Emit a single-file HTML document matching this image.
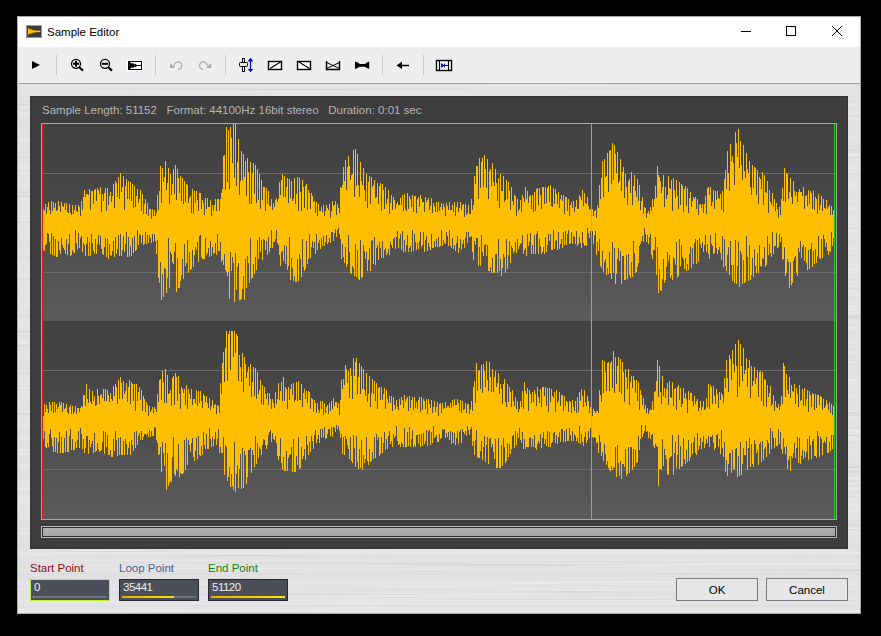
<!DOCTYPE html>
<html><head><meta charset="utf-8">
<style>
*{box-sizing:border-box}
html,body{margin:0;padding:0}
body{width:881px;height:636px;background:#000;position:relative;overflow:hidden;font-family:"Liberation Sans",sans-serif}
.a{position:absolute}
#win{left:17px;top:16px;width:844px;height:598px;border:1px solid #a9a9a9;
 background-color:#dfdfe1;
 background-image:repeating-linear-gradient(180deg,rgba(255,255,255,.35) 0px,rgba(255,255,255,0) 2px,rgba(0,0,0,.04) 3px,rgba(255,255,255,.2) 5px,rgba(0,0,0,.05) 7px,rgba(255,255,255,0) 9px);}
#title{left:18px;top:17px;width:842px;height:30px;background:#fff}
#ttext{left:47px;top:25.5px;font-size:11.5px;color:#000;white-space:pre}
#tbar{left:18px;top:47px;width:842px;height:36px;background:#eeeef1}
#tline{left:18px;top:83px;width:842px;height:1px;background:#a3a3a5}
#panel{left:30px;top:96px;width:818px;height:453px;background:#3d3d3d;border:1px solid #333}
#info{left:42px;top:103.5px;font-size:11.5px;color:#b4b4b4;white-space:pre}
#wbox{left:41px;top:123px;width:796px;height:397px;border:1px solid #a6a6a6;background:#444}
#ch1{left:42px;top:124px;width:794px;height:197px;background:linear-gradient(180deg,#424242 0%,#434343 20%,#5b5b5b 100%)}
#ch2{left:42px;top:321px;width:794px;height:198px;background:linear-gradient(180deg,#424242 0%,#434343 20%,#5b5b5b 100%)}
.grid{height:1px;background:#6c6c6c;left:42px;width:794px}
#scr{left:41px;top:526px;width:796px;height:12px;border:1px solid #bdbdbd;background:#2f2f2f}
#scri{left:43px;top:528px;width:792px;height:8px;background:linear-gradient(180deg,#b0b0b0,#a4a4a4)}
.lbl{font-size:11.5px;white-space:pre;top:562px}
.box{top:579px;width:80px;height:22px;background:#4a4f59;border:1px solid #262a30}
.val{font-size:11.5px;color:#f0f0f0;white-space:pre;top:581px;letter-spacing:-0.5px}
.prog{top:596px;height:2px;background:#6d7179}
.btn{top:578px;width:82px;height:23px;background:#e6e6e8;border:1px solid #7b7b7b;font-size:11.5px;color:#000;text-align:center;line-height:22px}
</style></head><body>
<div id="win" class="a"></div>
<div id="title" class="a"></div>
<svg class="a" style="left:26px;top:25px" width="16" height="13" viewBox="0 0 16 13">
 <rect x="0.5" y="0.5" width="15" height="12" fill="#3c3c3c" stroke="#9a9a9a"/>
 <path d="M1.9 2.6L6 6.4L1.9 10.2Z M4.6 3.6L8 6.4L4.6 9.2Z M7.6 4.4L10 6.4L7.6 8.4Z" fill="#ffbf00"/>
 <path d="M5 6.4H14.2" stroke="#ffbf00" stroke-width="1.5"/>
</svg>
<div id="ttext" class="a">Sample Editor</div>
<svg class="a" style="left:730px;top:17px" width="130" height="30">
 <path d="M11 14.5H21" stroke="#000" stroke-width="1"/>
 <rect x="56.5" y="9.5" width="9" height="9" fill="none" stroke="#000" stroke-width="1"/>
 <path d="M102 9L112 19M112 9L102 19" stroke="#000" stroke-width="1"/>
</svg>
<div id="brush" class="a" style="left:18px;top:84px;width:842px;height:529px;background:linear-gradient(180deg,rgb(227,227,229) 0px,rgb(227,227,229) 1px,rgb(228,228,230) 1px,rgb(228,228,230) 2px,rgb(227,227,229) 2px,rgb(227,227,229) 3px,rgb(226,226,228) 3px,rgb(226,226,228) 4px,rgb(225,225,227) 4px,rgb(225,225,227) 5px,rgb(226,226,228) 5px,rgb(226,226,228) 6px,rgb(229,229,231) 6px,rgb(229,229,231) 7px,rgb(228,228,230) 7px,rgb(228,228,230) 8px,rgb(230,230,232) 8px,rgb(230,230,232) 9px,rgb(228,228,230) 9px,rgb(228,228,230) 10px,rgb(228,228,230) 10px,rgb(228,228,230) 11px,rgb(228,228,230) 11px,rgb(228,228,230) 12px,rgb(224,224,226) 12px,rgb(224,224,226) 13px,rgb(228,228,230) 13px,rgb(228,228,230) 14px,rgb(228,228,230) 14px,rgb(228,228,230) 15px,rgb(228,228,230) 15px,rgb(228,228,230) 16px,rgb(224,224,226) 16px,rgb(224,224,226) 17px,rgb(223,223,225) 17px,rgb(223,223,225) 18px,rgb(224,224,226) 18px,rgb(224,224,226) 19px,rgb(225,225,227) 19px,rgb(225,225,227) 20px,rgb(227,227,229) 20px,rgb(227,227,229) 21px,rgb(227,227,229) 21px,rgb(227,227,229) 22px,rgb(228,228,230) 22px,rgb(228,228,230) 23px,rgb(226,226,228) 23px,rgb(226,226,228) 24px,rgb(227,227,229) 24px,rgb(227,227,229) 25px,rgb(228,228,230) 25px,rgb(228,228,230) 26px,rgb(226,226,228) 26px,rgb(226,226,228) 27px,rgb(230,230,232) 27px,rgb(230,230,232) 28px,rgb(229,229,231) 28px,rgb(229,229,231) 29px,rgb(230,230,232) 29px,rgb(230,230,232) 30px,rgb(227,227,229) 30px,rgb(227,227,229) 31px,rgb(226,226,228) 31px,rgb(226,226,228) 32px,rgb(226,226,228) 32px,rgb(226,226,228) 33px,rgb(226,226,228) 33px,rgb(226,226,228) 34px,rgb(228,228,230) 34px,rgb(228,228,230) 35px,rgb(228,228,230) 35px,rgb(228,228,230) 36px,rgb(226,226,228) 36px,rgb(226,226,228) 37px,rgb(225,225,227) 37px,rgb(225,225,227) 38px,rgb(225,225,227) 38px,rgb(225,225,227) 39px,rgb(229,229,231) 39px,rgb(229,229,231) 40px,rgb(226,226,228) 40px,rgb(226,226,228) 41px,rgb(227,227,229) 41px,rgb(227,227,229) 42px,rgb(228,228,230) 42px,rgb(228,228,230) 43px,rgb(224,224,226) 43px,rgb(224,224,226) 44px,rgb(226,226,228) 44px,rgb(226,226,228) 45px,rgb(229,229,231) 45px,rgb(229,229,231) 46px,rgb(224,224,226) 46px,rgb(224,224,226) 47px,rgb(225,225,227) 47px,rgb(225,225,227) 48px,rgb(226,226,228) 48px,rgb(226,226,228) 49px,rgb(225,225,227) 49px,rgb(225,225,227) 50px,rgb(227,227,229) 50px,rgb(227,227,229) 51px,rgb(227,227,229) 51px,rgb(227,227,229) 52px,rgb(224,224,226) 52px,rgb(224,224,226) 53px,rgb(228,228,230) 53px,rgb(228,228,230) 54px,rgb(229,229,231) 54px,rgb(229,229,231) 55px,rgb(229,229,231) 55px,rgb(229,229,231) 56px,rgb(231,231,233) 56px,rgb(231,231,233) 57px,rgb(229,229,231) 57px,rgb(229,229,231) 58px,rgb(228,228,230) 58px,rgb(228,228,230) 59px,rgb(225,225,227) 59px,rgb(225,225,227) 60px,rgb(227,227,229) 60px,rgb(227,227,229) 61px,rgb(226,226,228) 61px,rgb(226,226,228) 62px,rgb(226,226,228) 62px,rgb(226,226,228) 63px,rgb(224,224,226) 63px,rgb(224,224,226) 64px,rgb(224,224,226) 64px,rgb(224,224,226) 65px,rgb(225,225,227) 65px,rgb(225,225,227) 66px,rgb(229,229,231) 66px,rgb(229,229,231) 67px,rgb(224,224,226) 67px,rgb(224,224,226) 68px,rgb(223,223,225) 68px,rgb(223,223,225) 69px,rgb(226,226,228) 69px,rgb(226,226,228) 70px,rgb(229,229,231) 70px,rgb(229,229,231) 71px,rgb(229,229,231) 71px,rgb(229,229,231) 72px,rgb(224,224,226) 72px,rgb(224,224,226) 73px,rgb(221,221,223) 73px,rgb(221,221,223) 74px,rgb(226,226,228) 74px,rgb(226,226,228) 75px,rgb(225,225,227) 75px,rgb(225,225,227) 76px,rgb(224,224,226) 76px,rgb(224,224,226) 77px,rgb(228,228,230) 77px,rgb(228,228,230) 78px,rgb(229,229,231) 78px,rgb(229,229,231) 79px,rgb(228,228,230) 79px,rgb(228,228,230) 80px,rgb(228,228,230) 80px,rgb(228,228,230) 81px,rgb(228,228,230) 81px,rgb(228,228,230) 82px,rgb(231,231,233) 82px,rgb(231,231,233) 83px,rgb(229,229,231) 83px,rgb(229,229,231) 84px,rgb(229,229,231) 84px,rgb(229,229,231) 85px,rgb(229,229,231) 85px,rgb(229,229,231) 86px,rgb(225,225,227) 86px,rgb(225,225,227) 87px,rgb(229,229,231) 87px,rgb(229,229,231) 88px,rgb(229,229,231) 88px,rgb(229,229,231) 89px,rgb(229,229,231) 89px,rgb(229,229,231) 90px,rgb(224,224,226) 90px,rgb(224,224,226) 91px,rgb(225,225,227) 91px,rgb(225,225,227) 92px,rgb(228,228,230) 92px,rgb(228,228,230) 93px,rgb(224,224,226) 93px,rgb(224,224,226) 94px,rgb(226,226,228) 94px,rgb(226,226,228) 95px,rgb(228,228,230) 95px,rgb(228,228,230) 96px,rgb(225,225,227) 96px,rgb(225,225,227) 97px,rgb(229,229,231) 97px,rgb(229,229,231) 98px,rgb(229,229,231) 98px,rgb(229,229,231) 99px,rgb(227,227,229) 99px,rgb(227,227,229) 100px,rgb(228,228,230) 100px,rgb(228,228,230) 101px,rgb(229,229,231) 101px,rgb(229,229,231) 102px,rgb(228,228,230) 102px,rgb(228,228,230) 103px,rgb(230,230,232) 103px,rgb(230,230,232) 104px,rgb(227,227,229) 104px,rgb(227,227,229) 105px,rgb(226,226,228) 105px,rgb(226,226,228) 106px,rgb(229,229,231) 106px,rgb(229,229,231) 107px,rgb(228,228,230) 107px,rgb(228,228,230) 108px,rgb(226,226,228) 108px,rgb(226,226,228) 109px,rgb(228,228,230) 109px,rgb(228,228,230) 110px,rgb(230,230,232) 110px,rgb(230,230,232) 111px,rgb(227,227,229) 111px,rgb(227,227,229) 112px,rgb(224,224,226) 112px,rgb(224,224,226) 113px,rgb(226,226,228) 113px,rgb(226,226,228) 114px,rgb(226,226,228) 114px,rgb(226,226,228) 115px,rgb(226,226,228) 115px,rgb(226,226,228) 116px,rgb(229,229,231) 116px,rgb(229,229,231) 117px,rgb(226,226,228) 117px,rgb(226,226,228) 118px,rgb(229,229,231) 118px,rgb(229,229,231) 119px,rgb(225,225,227) 119px,rgb(225,225,227) 120px,rgb(225,225,227) 120px,rgb(225,225,227) 121px,rgb(227,227,229) 121px,rgb(227,227,229) 122px,rgb(229,229,231) 122px,rgb(229,229,231) 123px,rgb(230,230,232) 123px,rgb(230,230,232) 124px,rgb(229,229,231) 124px,rgb(229,229,231) 125px,rgb(228,228,230) 125px,rgb(228,228,230) 126px,rgb(228,228,230) 126px,rgb(228,228,230) 127px,rgb(228,228,230) 127px,rgb(228,228,230) 128px,rgb(227,227,229) 128px,rgb(227,227,229) 129px,rgb(228,228,230) 129px,rgb(228,228,230) 130px,rgb(228,228,230) 130px,rgb(228,228,230) 131px,rgb(227,227,229) 131px,rgb(227,227,229) 132px,rgb(229,229,231) 132px,rgb(229,229,231) 133px,rgb(229,229,231) 133px,rgb(229,229,231) 134px,rgb(232,232,234) 134px,rgb(232,232,234) 135px,rgb(229,229,231) 135px,rgb(229,229,231) 136px,rgb(227,227,229) 136px,rgb(227,227,229) 137px,rgb(226,226,228) 137px,rgb(226,226,228) 138px,rgb(227,227,229) 138px,rgb(227,227,229) 139px,rgb(229,229,231) 139px,rgb(229,229,231) 140px,rgb(227,227,229) 140px,rgb(227,227,229) 141px,rgb(228,228,230) 141px,rgb(228,228,230) 142px,rgb(231,231,233) 142px,rgb(231,231,233) 143px,rgb(223,223,225) 143px,rgb(223,223,225) 144px,rgb(224,224,226) 144px,rgb(224,224,226) 145px,rgb(226,226,228) 145px,rgb(226,226,228) 146px,rgb(228,228,230) 146px,rgb(228,228,230) 147px,rgb(228,228,230) 147px,rgb(228,228,230) 148px,rgb(226,226,228) 148px,rgb(226,226,228) 149px,rgb(228,228,230) 149px,rgb(228,228,230) 150px,rgb(228,228,230) 150px,rgb(228,228,230) 151px,rgb(226,226,228) 151px,rgb(226,226,228) 152px,rgb(231,231,233) 152px,rgb(231,231,233) 153px,rgb(229,229,231) 153px,rgb(229,229,231) 154px,rgb(227,227,229) 154px,rgb(227,227,229) 155px,rgb(227,227,229) 155px,rgb(227,227,229) 156px,rgb(226,226,228) 156px,rgb(226,226,228) 157px,rgb(227,227,229) 157px,rgb(227,227,229) 158px,rgb(222,222,224) 158px,rgb(222,222,224) 159px,rgb(224,224,226) 159px,rgb(224,224,226) 160px,rgb(228,228,230) 160px,rgb(228,228,230) 161px,rgb(225,225,227) 161px,rgb(225,225,227) 162px,rgb(226,226,228) 162px,rgb(226,226,228) 163px,rgb(229,229,231) 163px,rgb(229,229,231) 164px,rgb(229,229,231) 164px,rgb(229,229,231) 165px,rgb(231,231,233) 165px,rgb(231,231,233) 166px,rgb(225,225,227) 166px,rgb(225,225,227) 167px,rgb(226,226,228) 167px,rgb(226,226,228) 168px,rgb(226,226,228) 168px,rgb(226,226,228) 169px,rgb(228,228,230) 169px,rgb(228,228,230) 170px,rgb(229,229,231) 170px,rgb(229,229,231) 171px,rgb(223,223,225) 171px,rgb(223,223,225) 172px,rgb(228,228,230) 172px,rgb(228,228,230) 173px,rgb(224,224,226) 173px,rgb(224,224,226) 174px,rgb(227,227,229) 174px,rgb(227,227,229) 175px,rgb(224,224,226) 175px,rgb(224,224,226) 176px,rgb(226,226,228) 176px,rgb(226,226,228) 177px,rgb(229,229,231) 177px,rgb(229,229,231) 178px,rgb(227,227,229) 178px,rgb(227,227,229) 179px,rgb(228,228,230) 179px,rgb(228,228,230) 180px,rgb(229,229,231) 180px,rgb(229,229,231) 181px,rgb(228,228,230) 181px,rgb(228,228,230) 182px,rgb(227,227,229) 182px,rgb(227,227,229) 183px,rgb(230,230,232) 183px,rgb(230,230,232) 184px,rgb(230,230,232) 184px,rgb(230,230,232) 185px,rgb(228,228,230) 185px,rgb(228,228,230) 186px,rgb(233,233,235) 186px,rgb(233,233,235) 187px,rgb(227,227,229) 187px,rgb(227,227,229) 188px,rgb(229,229,231) 188px,rgb(229,229,231) 189px,rgb(227,227,229) 189px,rgb(227,227,229) 190px,rgb(227,227,229) 190px,rgb(227,227,229) 191px,rgb(228,228,230) 191px,rgb(228,228,230) 192px,rgb(228,228,230) 192px,rgb(228,228,230) 193px,rgb(229,229,231) 193px,rgb(229,229,231) 194px,rgb(225,225,227) 194px,rgb(225,225,227) 195px,rgb(223,223,225) 195px,rgb(223,223,225) 196px,rgb(227,227,229) 196px,rgb(227,227,229) 197px,rgb(225,225,227) 197px,rgb(225,225,227) 198px,rgb(224,224,226) 198px,rgb(224,224,226) 199px,rgb(223,223,225) 199px,rgb(223,223,225) 200px,rgb(228,228,230) 200px,rgb(228,228,230) 201px,rgb(229,229,231) 201px,rgb(229,229,231) 202px,rgb(231,231,233) 202px,rgb(231,231,233) 203px,rgb(226,226,228) 203px,rgb(226,226,228) 204px,rgb(227,227,229) 204px,rgb(227,227,229) 205px,rgb(225,225,227) 205px,rgb(225,225,227) 206px,rgb(228,228,230) 206px,rgb(228,228,230) 207px,rgb(230,230,232) 207px,rgb(230,230,232) 208px,rgb(226,226,228) 208px,rgb(226,226,228) 209px,rgb(230,230,232) 209px,rgb(230,230,232) 210px,rgb(230,230,232) 210px,rgb(230,230,232) 211px,rgb(228,228,230) 211px,rgb(228,228,230) 212px,rgb(223,223,225) 212px,rgb(223,223,225) 213px,rgb(228,228,230) 213px,rgb(228,228,230) 214px,rgb(227,227,229) 214px,rgb(227,227,229) 215px,rgb(226,226,228) 215px,rgb(226,226,228) 216px,rgb(227,227,229) 216px,rgb(227,227,229) 217px,rgb(228,228,230) 217px,rgb(228,228,230) 218px,rgb(230,230,232) 218px,rgb(230,230,232) 219px,rgb(226,226,228) 219px,rgb(226,226,228) 220px,rgb(229,229,231) 220px,rgb(229,229,231) 221px,rgb(231,231,233) 221px,rgb(231,231,233) 222px,rgb(231,231,233) 222px,rgb(231,231,233) 223px,rgb(228,228,230) 223px,rgb(228,228,230) 224px,rgb(226,226,228) 224px,rgb(226,226,228) 225px,rgb(229,229,231) 225px,rgb(229,229,231) 226px,rgb(228,228,230) 226px,rgb(228,228,230) 227px,rgb(228,228,230) 227px,rgb(228,228,230) 228px,rgb(230,230,232) 228px,rgb(230,230,232) 229px,rgb(228,228,230) 229px,rgb(228,228,230) 230px,rgb(223,223,225) 230px,rgb(223,223,225) 231px,rgb(225,225,227) 231px,rgb(225,225,227) 232px,rgb(223,223,225) 232px,rgb(223,223,225) 233px,rgb(227,227,229) 233px,rgb(227,227,229) 234px,rgb(228,228,230) 234px,rgb(228,228,230) 235px,rgb(226,226,228) 235px,rgb(226,226,228) 236px,rgb(227,227,229) 236px,rgb(227,227,229) 237px,rgb(228,228,230) 237px,rgb(228,228,230) 238px,rgb(228,228,230) 238px,rgb(228,228,230) 239px,rgb(230,230,232) 239px,rgb(230,230,232) 240px,rgb(228,228,230) 240px,rgb(228,228,230) 241px,rgb(229,229,231) 241px,rgb(229,229,231) 242px,rgb(231,231,233) 242px,rgb(231,231,233) 243px,rgb(231,231,233) 243px,rgb(231,231,233) 244px,rgb(227,227,229) 244px,rgb(227,227,229) 245px,rgb(229,229,231) 245px,rgb(229,229,231) 246px,rgb(224,224,226) 246px,rgb(224,224,226) 247px,rgb(224,224,226) 247px,rgb(224,224,226) 248px,rgb(222,222,224) 248px,rgb(222,222,224) 249px,rgb(227,227,229) 249px,rgb(227,227,229) 250px,rgb(225,225,227) 250px,rgb(225,225,227) 251px,rgb(226,226,228) 251px,rgb(226,226,228) 252px,rgb(226,226,228) 252px,rgb(226,226,228) 253px,rgb(227,227,229) 253px,rgb(227,227,229) 254px,rgb(226,226,228) 254px,rgb(226,226,228) 255px,rgb(227,227,229) 255px,rgb(227,227,229) 256px,rgb(230,230,232) 256px,rgb(230,230,232) 257px,rgb(228,228,230) 257px,rgb(228,228,230) 258px,rgb(228,228,230) 258px,rgb(228,228,230) 259px,rgb(229,229,231) 259px,rgb(229,229,231) 260px,rgb(227,227,229) 260px,rgb(227,227,229) 261px,rgb(225,225,227) 261px,rgb(225,225,227) 262px,rgb(225,225,227) 262px,rgb(225,225,227) 263px,rgb(228,228,230) 263px,rgb(228,228,230) 264px,rgb(224,224,226) 264px,rgb(224,224,226) 265px,rgb(225,225,227) 265px,rgb(225,225,227) 266px,rgb(228,228,230) 266px,rgb(228,228,230) 267px,rgb(229,229,231) 267px,rgb(229,229,231) 268px,rgb(228,228,230) 268px,rgb(228,228,230) 269px,rgb(229,229,231) 269px,rgb(229,229,231) 270px,rgb(228,228,230) 270px,rgb(228,228,230) 271px,rgb(225,225,227) 271px,rgb(225,225,227) 272px,rgb(223,223,225) 272px,rgb(223,223,225) 273px,rgb(224,224,226) 273px,rgb(224,224,226) 274px,rgb(228,228,230) 274px,rgb(228,228,230) 275px,rgb(226,226,228) 275px,rgb(226,226,228) 276px,rgb(225,225,227) 276px,rgb(225,225,227) 277px,rgb(225,225,227) 277px,rgb(225,225,227) 278px,rgb(223,223,225) 278px,rgb(223,223,225) 279px,rgb(225,225,227) 279px,rgb(225,225,227) 280px,rgb(224,224,226) 280px,rgb(224,224,226) 281px,rgb(227,227,229) 281px,rgb(227,227,229) 282px,rgb(222,222,224) 282px,rgb(222,222,224) 283px,rgb(226,226,228) 283px,rgb(226,226,228) 284px,rgb(225,225,227) 284px,rgb(225,225,227) 285px,rgb(223,223,225) 285px,rgb(223,223,225) 286px,rgb(227,227,229) 286px,rgb(227,227,229) 287px,rgb(226,226,228) 287px,rgb(226,226,228) 288px,rgb(222,222,224) 288px,rgb(222,222,224) 289px,rgb(224,224,226) 289px,rgb(224,224,226) 290px,rgb(226,226,228) 290px,rgb(226,226,228) 291px,rgb(226,226,228) 291px,rgb(226,226,228) 292px,rgb(228,228,230) 292px,rgb(228,228,230) 293px,rgb(229,229,231) 293px,rgb(229,229,231) 294px,rgb(229,229,231) 294px,rgb(229,229,231) 295px,rgb(228,228,230) 295px,rgb(228,228,230) 296px,rgb(230,230,232) 296px,rgb(230,230,232) 297px,rgb(229,229,231) 297px,rgb(229,229,231) 298px,rgb(229,229,231) 298px,rgb(229,229,231) 299px,rgb(224,224,226) 299px,rgb(224,224,226) 300px,rgb(228,228,230) 300px,rgb(228,228,230) 301px,rgb(230,230,232) 301px,rgb(230,230,232) 302px,rgb(227,227,229) 302px,rgb(227,227,229) 303px,rgb(226,226,228) 303px,rgb(226,226,228) 304px,rgb(231,231,233) 304px,rgb(231,231,233) 305px,rgb(225,225,227) 305px,rgb(225,225,227) 306px,rgb(227,227,229) 306px,rgb(227,227,229) 307px,rgb(232,232,234) 307px,rgb(232,232,234) 308px,rgb(227,227,229) 308px,rgb(227,227,229) 309px,rgb(228,228,230) 309px,rgb(228,228,230) 310px,rgb(231,231,233) 310px,rgb(231,231,233) 311px,rgb(228,228,230) 311px,rgb(228,228,230) 312px,rgb(229,229,231) 312px,rgb(229,229,231) 313px,rgb(229,229,231) 313px,rgb(229,229,231) 314px,rgb(226,226,228) 314px,rgb(226,226,228) 315px,rgb(226,226,228) 315px,rgb(226,226,228) 316px,rgb(227,227,229) 316px,rgb(227,227,229) 317px,rgb(229,229,231) 317px,rgb(229,229,231) 318px,rgb(228,228,230) 318px,rgb(228,228,230) 319px,rgb(227,227,229) 319px,rgb(227,227,229) 320px,rgb(225,225,227) 320px,rgb(225,225,227) 321px,rgb(226,226,228) 321px,rgb(226,226,228) 322px,rgb(228,228,230) 322px,rgb(228,228,230) 323px,rgb(228,228,230) 323px,rgb(228,228,230) 324px,rgb(226,226,228) 324px,rgb(226,226,228) 325px,rgb(225,225,227) 325px,rgb(225,225,227) 326px,rgb(231,231,233) 326px,rgb(231,231,233) 327px,rgb(231,231,233) 327px,rgb(231,231,233) 328px,rgb(230,230,232) 328px,rgb(230,230,232) 329px,rgb(223,223,225) 329px,rgb(223,223,225) 330px,rgb(227,227,229) 330px,rgb(227,227,229) 331px,rgb(228,228,230) 331px,rgb(228,228,230) 332px,rgb(231,231,233) 332px,rgb(231,231,233) 333px,rgb(229,229,231) 333px,rgb(229,229,231) 334px,rgb(228,228,230) 334px,rgb(228,228,230) 335px,rgb(228,228,230) 335px,rgb(228,228,230) 336px,rgb(224,224,226) 336px,rgb(224,224,226) 337px,rgb(228,228,230) 337px,rgb(228,228,230) 338px,rgb(228,228,230) 338px,rgb(228,228,230) 339px,rgb(226,226,228) 339px,rgb(226,226,228) 340px,rgb(229,229,231) 340px,rgb(229,229,231) 341px,rgb(231,231,233) 341px,rgb(231,231,233) 342px,rgb(226,226,228) 342px,rgb(226,226,228) 343px,rgb(225,225,227) 343px,rgb(225,225,227) 344px,rgb(227,227,229) 344px,rgb(227,227,229) 345px,rgb(227,227,229) 345px,rgb(227,227,229) 346px,rgb(226,226,228) 346px,rgb(226,226,228) 347px,rgb(225,225,227) 347px,rgb(225,225,227) 348px,rgb(230,230,232) 348px,rgb(230,230,232) 349px,rgb(230,230,232) 349px,rgb(230,230,232) 350px,rgb(226,226,228) 350px,rgb(226,226,228) 351px,rgb(224,224,226) 351px,rgb(224,224,226) 352px,rgb(229,229,231) 352px,rgb(229,229,231) 353px,rgb(230,230,232) 353px,rgb(230,230,232) 354px,rgb(232,232,234) 354px,rgb(232,232,234) 355px,rgb(230,230,232) 355px,rgb(230,230,232) 356px,rgb(226,226,228) 356px,rgb(226,226,228) 357px,rgb(227,227,229) 357px,rgb(227,227,229) 358px,rgb(223,223,225) 358px,rgb(223,223,225) 359px,rgb(224,224,226) 359px,rgb(224,224,226) 360px,rgb(226,226,228) 360px,rgb(226,226,228) 361px,rgb(228,228,230) 361px,rgb(228,228,230) 362px,rgb(226,226,228) 362px,rgb(226,226,228) 363px,rgb(226,226,228) 363px,rgb(226,226,228) 364px,rgb(228,228,230) 364px,rgb(228,228,230) 365px,rgb(228,228,230) 365px,rgb(228,228,230) 366px,rgb(229,229,231) 366px,rgb(229,229,231) 367px,rgb(228,228,230) 367px,rgb(228,228,230) 368px,rgb(227,227,229) 368px,rgb(227,227,229) 369px,rgb(228,228,230) 369px,rgb(228,228,230) 370px,rgb(228,228,230) 370px,rgb(228,228,230) 371px,rgb(226,226,228) 371px,rgb(226,226,228) 372px,rgb(225,225,227) 372px,rgb(225,225,227) 373px,rgb(226,226,228) 373px,rgb(226,226,228) 374px,rgb(227,227,229) 374px,rgb(227,227,229) 375px,rgb(227,227,229) 375px,rgb(227,227,229) 376px,rgb(227,227,229) 376px,rgb(227,227,229) 377px,rgb(227,227,229) 377px,rgb(227,227,229) 378px,rgb(227,227,229) 378px,rgb(227,227,229) 379px,rgb(224,224,226) 379px,rgb(224,224,226) 380px,rgb(227,227,229) 380px,rgb(227,227,229) 381px,rgb(229,229,231) 381px,rgb(229,229,231) 382px,rgb(229,229,231) 382px,rgb(229,229,231) 383px,rgb(227,227,229) 383px,rgb(227,227,229) 384px,rgb(228,228,230) 384px,rgb(228,228,230) 385px,rgb(225,225,227) 385px,rgb(225,225,227) 386px,rgb(223,223,225) 386px,rgb(223,223,225) 387px,rgb(226,226,228) 387px,rgb(226,226,228) 388px,rgb(225,225,227) 388px,rgb(225,225,227) 389px,rgb(228,228,230) 389px,rgb(228,228,230) 390px,rgb(225,225,227) 390px,rgb(225,225,227) 391px,rgb(221,221,223) 391px,rgb(221,221,223) 392px,rgb(223,223,225) 392px,rgb(223,223,225) 393px,rgb(229,229,231) 393px,rgb(229,229,231) 394px,rgb(227,227,229) 394px,rgb(227,227,229) 395px,rgb(224,224,226) 395px,rgb(224,224,226) 396px,rgb(225,225,227) 396px,rgb(225,225,227) 397px,rgb(227,227,229) 397px,rgb(227,227,229) 398px,rgb(228,228,230) 398px,rgb(228,228,230) 399px,rgb(228,228,230) 399px,rgb(228,228,230) 400px,rgb(230,230,232) 400px,rgb(230,230,232) 401px,rgb(229,229,231) 401px,rgb(229,229,231) 402px,rgb(228,228,230) 402px,rgb(228,228,230) 403px,rgb(228,228,230) 403px,rgb(228,228,230) 404px,rgb(231,231,233) 404px,rgb(231,231,233) 405px,rgb(230,230,232) 405px,rgb(230,230,232) 406px,rgb(230,230,232) 406px,rgb(230,230,232) 407px,rgb(226,226,228) 407px,rgb(226,226,228) 408px,rgb(226,226,228) 408px,rgb(226,226,228) 409px,rgb(228,228,230) 409px,rgb(228,228,230) 410px,rgb(227,227,229) 410px,rgb(227,227,229) 411px,rgb(229,229,231) 411px,rgb(229,229,231) 412px,rgb(229,229,231) 412px,rgb(229,229,231) 413px,rgb(229,229,231) 413px,rgb(229,229,231) 414px,rgb(227,227,229) 414px,rgb(227,227,229) 415px,rgb(232,232,234) 415px,rgb(232,232,234) 416px,rgb(231,231,233) 416px,rgb(231,231,233) 417px,rgb(228,228,230) 417px,rgb(228,228,230) 418px,rgb(228,228,230) 418px,rgb(228,228,230) 419px,rgb(232,232,234) 419px,rgb(232,232,234) 420px,rgb(228,228,230) 420px,rgb(228,228,230) 421px,rgb(229,229,231) 421px,rgb(229,229,231) 422px,rgb(230,230,232) 422px,rgb(230,230,232) 423px,rgb(228,228,230) 423px,rgb(228,228,230) 424px,rgb(225,225,227) 424px,rgb(225,225,227) 425px,rgb(227,227,229) 425px,rgb(227,227,229) 426px,rgb(228,228,230) 426px,rgb(228,228,230) 427px,rgb(229,229,231) 427px,rgb(229,229,231) 428px,rgb(229,229,231) 428px,rgb(229,229,231) 429px,rgb(228,228,230) 429px,rgb(228,228,230) 430px,rgb(229,229,231) 430px,rgb(229,229,231) 431px,rgb(229,229,231) 431px,rgb(229,229,231) 432px,rgb(228,228,230) 432px,rgb(228,228,230) 433px,rgb(227,227,229) 433px,rgb(227,227,229) 434px,rgb(227,227,229) 434px,rgb(227,227,229) 435px,rgb(228,228,230) 435px,rgb(228,228,230) 436px,rgb(225,225,227) 436px,rgb(225,225,227) 437px,rgb(225,225,227) 437px,rgb(225,225,227) 438px,rgb(226,226,228) 438px,rgb(226,226,228) 439px,rgb(224,224,226) 439px,rgb(224,224,226) 440px,rgb(225,225,227) 440px,rgb(225,225,227) 441px,rgb(222,222,224) 441px,rgb(222,222,224) 442px,rgb(224,224,226) 442px,rgb(224,224,226) 443px,rgb(227,227,229) 443px,rgb(227,227,229) 444px,rgb(228,228,230) 444px,rgb(228,228,230) 445px,rgb(227,227,229) 445px,rgb(227,227,229) 446px,rgb(227,227,229) 446px,rgb(227,227,229) 447px,rgb(224,224,226) 447px,rgb(224,224,226) 448px,rgb(230,230,232) 448px,rgb(230,230,232) 449px,rgb(229,229,231) 449px,rgb(229,229,231) 450px,rgb(230,230,232) 450px,rgb(230,230,232) 451px,rgb(226,226,228) 451px,rgb(226,226,228) 452px,rgb(226,226,228) 452px,rgb(226,226,228) 453px,rgb(223,223,225) 453px,rgb(223,223,225) 454px,rgb(227,227,229) 454px,rgb(227,227,229) 455px,rgb(229,229,231) 455px,rgb(229,229,231) 456px,rgb(224,224,226) 456px,rgb(224,224,226) 457px,rgb(226,226,228) 457px,rgb(226,226,228) 458px,rgb(228,228,230) 458px,rgb(228,228,230) 459px,rgb(224,224,226) 459px,rgb(224,224,226) 460px,rgb(222,222,224) 460px,rgb(222,222,224) 461px,rgb(223,223,225) 461px,rgb(223,223,225) 462px,rgb(224,224,226) 462px,rgb(224,224,226) 463px,rgb(223,223,225) 463px,rgb(223,223,225) 464px,rgb(226,226,228) 464px,rgb(226,226,228) 465px,rgb(227,227,229) 465px,rgb(227,227,229) 466px,rgb(228,228,230) 466px,rgb(228,228,230) 467px,rgb(229,229,231) 467px,rgb(229,229,231) 468px,rgb(231,231,233) 468px,rgb(231,231,233) 469px,rgb(231,231,233) 469px,rgb(231,231,233) 470px,rgb(226,226,228) 470px,rgb(226,226,228) 471px,rgb(226,226,228) 471px,rgb(226,226,228) 472px,rgb(224,224,226) 472px,rgb(224,224,226) 473px,rgb(224,224,226) 473px,rgb(224,224,226) 474px,rgb(226,226,228) 474px,rgb(226,226,228) 475px,rgb(227,227,229) 475px,rgb(227,227,229) 476px,rgb(228,228,230) 476px,rgb(228,228,230) 477px,rgb(224,224,226) 477px,rgb(224,224,226) 478px,rgb(224,224,226) 478px,rgb(224,224,226) 479px,rgb(226,226,228) 479px,rgb(226,226,228) 480px,rgb(226,226,228) 480px,rgb(226,226,228) 481px,rgb(226,226,228) 481px,rgb(226,226,228) 482px,rgb(227,227,229) 482px,rgb(227,227,229) 483px,rgb(225,225,227) 483px,rgb(225,225,227) 484px,rgb(228,228,230) 484px,rgb(228,228,230) 485px,rgb(228,228,230) 485px,rgb(228,228,230) 486px,rgb(227,227,229) 486px,rgb(227,227,229) 487px,rgb(226,226,228) 487px,rgb(226,226,228) 488px,rgb(226,226,228) 488px,rgb(226,226,228) 489px,rgb(221,221,223) 489px,rgb(221,221,223) 490px,rgb(223,223,225) 490px,rgb(223,223,225) 491px,rgb(226,226,228) 491px,rgb(226,226,228) 492px,rgb(224,224,226) 492px,rgb(224,224,226) 493px,rgb(226,226,228) 493px,rgb(226,226,228) 494px,rgb(227,227,229) 494px,rgb(227,227,229) 495px,rgb(224,224,226) 495px,rgb(224,224,226) 496px,rgb(226,226,228) 496px,rgb(226,226,228) 497px,rgb(226,226,228) 497px,rgb(226,226,228) 498px,rgb(228,228,230) 498px,rgb(228,228,230) 499px,rgb(228,228,230) 499px,rgb(228,228,230) 500px,rgb(227,227,229) 500px,rgb(227,227,229) 501px,rgb(225,225,227) 501px,rgb(225,225,227) 502px,rgb(226,226,228) 502px,rgb(226,226,228) 503px,rgb(227,227,229) 503px,rgb(227,227,229) 504px,rgb(228,228,230) 504px,rgb(228,228,230) 505px,rgb(228,228,230) 505px,rgb(228,228,230) 506px,rgb(226,226,228) 506px,rgb(226,226,228) 507px,rgb(224,224,226) 507px,rgb(224,224,226) 508px,rgb(225,225,227) 508px,rgb(225,225,227) 509px,rgb(225,225,227) 509px,rgb(225,225,227) 510px,rgb(224,224,226) 510px,rgb(224,224,226) 511px,rgb(226,226,228) 511px,rgb(226,226,228) 512px,rgb(226,226,228) 512px,rgb(226,226,228) 513px,rgb(227,227,229) 513px,rgb(227,227,229) 514px,rgb(228,228,230) 514px,rgb(228,228,230) 515px,rgb(227,227,229) 515px,rgb(227,227,229) 516px,rgb(231,231,233) 516px,rgb(231,231,233) 517px,rgb(228,228,230) 517px,rgb(228,228,230) 518px,rgb(229,229,231) 518px,rgb(229,229,231) 519px,rgb(228,228,230) 519px,rgb(228,228,230) 520px,rgb(230,230,232) 520px,rgb(230,230,232) 521px,rgb(223,223,225) 521px,rgb(223,223,225) 522px,rgb(224,224,226) 522px,rgb(224,224,226) 523px,rgb(227,227,229) 523px,rgb(227,227,229) 524px,rgb(228,228,230) 524px,rgb(228,228,230) 525px,rgb(232,232,234) 525px,rgb(232,232,234) 526px,rgb(229,229,231) 526px,rgb(229,229,231) 527px,rgb(230,230,232) 527px,rgb(230,230,232) 528px,rgb(230,230,232) 528px,rgb(230,230,232) 529px,rgb(230,230,232) 529px,rgb(230,230,232) 530px)"></div>
<svg class="a" style="left:18px;top:84px" width="842" height="529"><defs><linearGradient id="gl"><stop offset="0" stop-color="#f4f4f6" stop-opacity="0"/><stop offset=".5" stop-color="#f4f4f6"/><stop offset="1" stop-color="#f4f4f6" stop-opacity="0"/></linearGradient><linearGradient id="gd"><stop offset="0" stop-color="#c8c8cc" stop-opacity="0"/><stop offset=".5" stop-color="#c8c8cc"/><stop offset="1" stop-color="#c8c8cc" stop-opacity="0"/></linearGradient></defs><rect x="-15" y="368" width="368" height="2" fill="url(#gd)" opacity="0.40"/><rect x="86" y="373" width="314" height="1" fill="url(#gd)" opacity="0.39"/><rect x="822" y="3" width="311" height="2" fill="url(#gd)" opacity="0.36"/><rect x="202" y="426" width="252" height="1" fill="url(#gl)" opacity="0.54"/><rect x="709" y="346" width="263" height="2" fill="url(#gl)" opacity="0.57"/><rect x="109" y="296" width="250" height="2" fill="url(#gl)" opacity="0.36"/><rect x="219" y="78" width="279" height="1" fill="url(#gd)" opacity="0.54"/><rect x="704" y="52" width="398" height="1" fill="url(#gl)" opacity="0.57"/><rect x="296" y="272" width="321" height="2" fill="url(#gl)" opacity="0.51"/><rect x="755" y="438" width="74" height="2" fill="url(#gd)" opacity="0.45"/><rect x="586" y="208" width="101" height="1" fill="url(#gl)" opacity="0.49"/><rect x="509" y="141" width="206" height="1" fill="url(#gl)" opacity="0.56"/><rect x="333" y="174" width="272" height="2" fill="url(#gl)" opacity="0.32"/><rect x="265" y="266" width="395" height="1" fill="url(#gl)" opacity="0.39"/><rect x="21" y="122" width="389" height="2" fill="url(#gl)" opacity="0.28"/><rect x="413" y="509" width="172" height="2" fill="url(#gl)" opacity="0.33"/><rect x="-8" y="437" width="340" height="1" fill="url(#gl)" opacity="0.24"/><rect x="176" y="93" width="182" height="1" fill="url(#gl)" opacity="0.52"/><rect x="617" y="20" width="271" height="1" fill="url(#gl)" opacity="0.50"/><rect x="196" y="276" width="91" height="1" fill="url(#gl)" opacity="0.43"/><rect x="391" y="515" width="382" height="1" fill="url(#gd)" opacity="0.54"/><rect x="243" y="254" width="264" height="1" fill="url(#gd)" opacity="0.37"/><rect x="-20" y="22" width="76" height="2" fill="url(#gl)" opacity="0.51"/><rect x="-150" y="501" width="97" height="2" fill="url(#gl)" opacity="0.57"/><rect x="309" y="479" width="187" height="1" fill="url(#gd)" opacity="0.29"/><rect x="814" y="111" width="418" height="1" fill="url(#gd)" opacity="0.51"/><rect x="-149" y="40" width="124" height="1" fill="url(#gl)" opacity="0.57"/><rect x="835" y="311" width="125" height="1" fill="url(#gd)" opacity="0.41"/><rect x="-49" y="114" width="96" height="1" fill="url(#gl)" opacity="0.58"/><rect x="78" y="267" width="367" height="2" fill="url(#gl)" opacity="0.41"/><rect x="831" y="285" width="221" height="1" fill="url(#gd)" opacity="0.55"/><rect x="410" y="240" width="186" height="1" fill="url(#gl)" opacity="0.36"/><rect x="-128" y="56" width="159" height="1" fill="url(#gl)" opacity="0.47"/><rect x="83" y="263" width="401" height="1" fill="url(#gl)" opacity="0.35"/><rect x="585" y="346" width="275" height="1" fill="url(#gl)" opacity="0.36"/><rect x="606" y="299" width="318" height="1" fill="url(#gl)" opacity="0.40"/><rect x="86" y="198" width="298" height="1" fill="url(#gl)" opacity="0.50"/><rect x="474" y="507" width="155" height="2" fill="url(#gd)" opacity="0.39"/><rect x="821" y="57" width="364" height="1" fill="url(#gl)" opacity="0.36"/><rect x="275" y="145" width="86" height="1" fill="url(#gd)" opacity="0.27"/><rect x="600" y="321" width="117" height="1" fill="url(#gd)" opacity="0.57"/><rect x="518" y="189" width="328" height="1" fill="url(#gd)" opacity="0.21"/><rect x="709" y="387" width="251" height="1" fill="url(#gd)" opacity="0.38"/><rect x="136" y="80" width="101" height="1" fill="url(#gl)" opacity="0.58"/><rect x="239" y="212" width="242" height="2" fill="url(#gd)" opacity="0.32"/><rect x="-100" y="89" width="302" height="1" fill="url(#gl)" opacity="0.42"/><rect x="222" y="331" width="302" height="2" fill="url(#gl)" opacity="0.36"/><rect x="-109" y="414" width="252" height="2" fill="url(#gl)" opacity="0.23"/><rect x="49" y="263" width="92" height="1" fill="url(#gd)" opacity="0.34"/><rect x="118" y="44" width="413" height="1" fill="url(#gl)" opacity="0.31"/><rect x="-126" y="66" width="179" height="1" fill="url(#gl)" opacity="0.49"/><rect x="658" y="395" width="188" height="1" fill="url(#gd)" opacity="0.53"/><rect x="37" y="508" width="64" height="2" fill="url(#gd)" opacity="0.50"/><rect x="471" y="154" width="180" height="1" fill="url(#gl)" opacity="0.33"/><rect x="374" y="80" width="161" height="1" fill="url(#gl)" opacity="0.26"/><rect x="343" y="34" width="342" height="1" fill="url(#gd)" opacity="0.26"/><rect x="-77" y="107" width="195" height="1" fill="url(#gd)" opacity="0.28"/><rect x="27" y="457" width="179" height="2" fill="url(#gl)" opacity="0.38"/><rect x="615" y="240" width="335" height="1" fill="url(#gd)" opacity="0.47"/><rect x="150" y="300" width="203" height="2" fill="url(#gd)" opacity="0.35"/><rect x="299" y="203" width="186" height="1" fill="url(#gl)" opacity="0.29"/><rect x="184" y="192" width="93" height="1" fill="url(#gl)" opacity="0.60"/><rect x="515" y="236" width="111" height="1" fill="url(#gd)" opacity="0.60"/><rect x="754" y="486" width="178" height="1" fill="url(#gd)" opacity="0.57"/><rect x="88" y="300" width="121" height="2" fill="url(#gl)" opacity="0.44"/><rect x="802" y="198" width="98" height="1" fill="url(#gl)" opacity="0.55"/><rect x="643" y="266" width="400" height="1" fill="url(#gd)" opacity="0.24"/><rect x="72" y="358" width="79" height="1" fill="url(#gl)" opacity="0.26"/><rect x="-111" y="261" width="366" height="2" fill="url(#gd)" opacity="0.57"/><rect x="268" y="335" width="407" height="1" fill="url(#gl)" opacity="0.45"/><rect x="664" y="32" width="313" height="1" fill="url(#gd)" opacity="0.23"/><rect x="529" y="404" width="341" height="1" fill="url(#gl)" opacity="0.41"/><rect x="562" y="407" width="198" height="1" fill="url(#gl)" opacity="0.31"/><rect x="169" y="52" width="350" height="1" fill="url(#gd)" opacity="0.37"/><rect x="509" y="372" width="160" height="2" fill="url(#gl)" opacity="0.36"/><rect x="773" y="444" width="140" height="1" fill="url(#gl)" opacity="0.53"/><rect x="321" y="373" width="143" height="1" fill="url(#gl)" opacity="0.22"/><rect x="-59" y="406" width="353" height="1" fill="url(#gd)" opacity="0.35"/><rect x="206" y="149" width="205" height="1" fill="url(#gl)" opacity="0.27"/><rect x="352" y="392" width="161" height="1" fill="url(#gl)" opacity="0.53"/><rect x="172" y="494" width="87" height="1" fill="url(#gd)" opacity="0.45"/><rect x="505" y="164" width="173" height="1" fill="url(#gd)" opacity="0.45"/><rect x="37" y="484" width="349" height="1" fill="url(#gl)" opacity="0.36"/><rect x="217" y="392" width="123" height="2" fill="url(#gl)" opacity="0.59"/><rect x="-108" y="197" width="347" height="1" fill="url(#gd)" opacity="0.47"/><rect x="-30" y="331" width="259" height="1" fill="url(#gd)" opacity="0.42"/><rect x="514" y="313" width="275" height="1" fill="url(#gl)" opacity="0.30"/><rect x="307" y="376" width="317" height="1" fill="url(#gl)" opacity="0.21"/><rect x="326" y="501" width="180" height="2" fill="url(#gl)" opacity="0.45"/><rect x="679" y="183" width="302" height="1" fill="url(#gl)" opacity="0.23"/><rect x="-57" y="374" width="286" height="1" fill="url(#gd)" opacity="0.46"/><rect x="-66" y="133" width="220" height="1" fill="url(#gd)" opacity="0.40"/><rect x="766" y="516" width="253" height="1" fill="url(#gd)" opacity="0.51"/><rect x="478" y="67" width="414" height="2" fill="url(#gd)" opacity="0.28"/><rect x="144" y="503" width="144" height="1" fill="url(#gd)" opacity="0.49"/><rect x="475" y="359" width="189" height="1" fill="url(#gl)" opacity="0.56"/><rect x="-3" y="467" width="190" height="1" fill="url(#gd)" opacity="0.57"/><rect x="480" y="269" width="319" height="1" fill="url(#gl)" opacity="0.35"/><rect x="15" y="413" width="385" height="2" fill="url(#gd)" opacity="0.47"/><rect x="661" y="172" width="195" height="1" fill="url(#gl)" opacity="0.41"/><rect x="839" y="368" width="291" height="2" fill="url(#gd)" opacity="0.43"/><rect x="108" y="107" width="334" height="2" fill="url(#gd)" opacity="0.36"/><rect x="234" y="271" width="248" height="2" fill="url(#gd)" opacity="0.34"/><rect x="85" y="452" width="150" height="1" fill="url(#gd)" opacity="0.58"/><rect x="109" y="528" width="218" height="1" fill="url(#gd)" opacity="0.59"/><rect x="600" y="320" width="60" height="1" fill="url(#gd)" opacity="0.29"/><rect x="277" y="442" width="322" height="1" fill="url(#gl)" opacity="0.22"/><rect x="-128" y="46" width="87" height="1" fill="url(#gl)" opacity="0.34"/><rect x="396" y="365" width="174" height="1" fill="url(#gl)" opacity="0.32"/><rect x="488" y="375" width="303" height="2" fill="url(#gl)" opacity="0.21"/><rect x="311" y="152" width="109" height="1" fill="url(#gl)" opacity="0.26"/><rect x="261" y="276" width="195" height="2" fill="url(#gd)" opacity="0.22"/><rect x="458" y="358" width="390" height="1" fill="url(#gd)" opacity="0.44"/><rect x="104" y="504" width="144" height="1" fill="url(#gd)" opacity="0.22"/><rect x="40" y="415" width="181" height="1" fill="url(#gl)" opacity="0.56"/><rect x="-5" y="201" width="271" height="1" fill="url(#gl)" opacity="0.44"/><rect x="682" y="425" width="373" height="1" fill="url(#gl)" opacity="0.32"/><rect x="760" y="49" width="304" height="2" fill="url(#gd)" opacity="0.20"/><rect x="-68" y="476" width="395" height="1" fill="url(#gl)" opacity="0.29"/><rect x="509" y="237" width="79" height="2" fill="url(#gl)" opacity="0.56"/><rect x="578" y="269" width="86" height="1" fill="url(#gl)" opacity="0.42"/><rect x="152" y="271" width="388" height="1" fill="url(#gd)" opacity="0.56"/><rect x="-135" y="519" width="146" height="2" fill="url(#gl)" opacity="0.29"/><rect x="614" y="163" width="227" height="1" fill="url(#gl)" opacity="0.36"/><rect x="779" y="388" width="382" height="2" fill="url(#gd)" opacity="0.59"/><rect x="333" y="480" width="331" height="1" fill="url(#gd)" opacity="0.54"/><rect x="434" y="239" width="217" height="1" fill="url(#gd)" opacity="0.36"/><rect x="-2" y="175" width="76" height="2" fill="url(#gl)" opacity="0.24"/><rect x="-5" y="353" width="418" height="1" fill="url(#gl)" opacity="0.22"/><rect x="563" y="43" width="94" height="1" fill="url(#gd)" opacity="0.23"/><rect x="54" y="372" width="333" height="2" fill="url(#gd)" opacity="0.23"/><rect x="-41" y="393" width="186" height="1" fill="url(#gl)" opacity="0.24"/><rect x="694" y="89" width="383" height="1" fill="url(#gd)" opacity="0.39"/><rect x="151" y="209" width="223" height="1" fill="url(#gl)" opacity="0.30"/><rect x="-101" y="289" width="248" height="1" fill="url(#gd)" opacity="0.51"/><rect x="721" y="487" width="207" height="1" fill="url(#gd)" opacity="0.21"/><rect x="381" y="446" width="110" height="1" fill="url(#gl)" opacity="0.48"/><rect x="581" y="221" width="106" height="1" fill="url(#gd)" opacity="0.31"/><rect x="145" y="206" width="87" height="1" fill="url(#gl)" opacity="0.40"/><rect x="840" y="188" width="313" height="1" fill="url(#gd)" opacity="0.58"/><rect x="140" y="162" width="169" height="1" fill="url(#gd)" opacity="0.29"/><rect x="352" y="82" width="416" height="1" fill="url(#gd)" opacity="0.24"/><rect x="260" y="97" width="262" height="1" fill="url(#gd)" opacity="0.50"/><rect x="230" y="25" width="165" height="1" fill="url(#gl)" opacity="0.37"/><rect x="238" y="175" width="382" height="1" fill="url(#gl)" opacity="0.38"/><rect x="206" y="34" width="357" height="2" fill="url(#gl)" opacity="0.26"/><rect x="23" y="331" width="297" height="1" fill="url(#gl)" opacity="0.51"/><rect x="192" y="129" width="296" height="1" fill="url(#gd)" opacity="0.48"/><rect x="158" y="273" width="420" height="2" fill="url(#gd)" opacity="0.45"/><rect x="590" y="253" width="227" height="1" fill="url(#gd)" opacity="0.34"/><rect x="114" y="193" width="112" height="1" fill="url(#gl)" opacity="0.46"/><rect x="1" y="154" width="214" height="1" fill="url(#gd)" opacity="0.37"/><rect x="137" y="109" width="165" height="1" fill="url(#gd)" opacity="0.39"/><rect x="560" y="447" width="173" height="1" fill="url(#gd)" opacity="0.45"/><rect x="113" y="145" width="369" height="1" fill="url(#gd)" opacity="0.20"/><rect x="567" y="440" width="353" height="2" fill="url(#gd)" opacity="0.46"/><rect x="545" y="234" width="152" height="1" fill="url(#gd)" opacity="0.38"/><rect x="766" y="100" width="274" height="2" fill="url(#gl)" opacity="0.36"/><rect x="106" y="160" width="276" height="2" fill="url(#gl)" opacity="0.21"/><rect x="765" y="187" width="395" height="2" fill="url(#gl)" opacity="0.20"/><rect x="-111" y="108" width="188" height="2" fill="url(#gd)" opacity="0.26"/><rect x="381" y="204" width="238" height="1" fill="url(#gl)" opacity="0.43"/><rect x="374" y="487" width="68" height="1" fill="url(#gd)" opacity="0.53"/><rect x="609" y="420" width="293" height="1" fill="url(#gl)" opacity="0.47"/><rect x="596" y="125" width="374" height="1" fill="url(#gl)" opacity="0.22"/><rect x="-88" y="409" width="66" height="1" fill="url(#gl)" opacity="0.57"/><rect x="444" y="360" width="195" height="1" fill="url(#gl)" opacity="0.32"/><rect x="670" y="224" width="260" height="2" fill="url(#gl)" opacity="0.27"/><rect x="679" y="70" width="384" height="2" fill="url(#gl)" opacity="0.46"/><rect x="211" y="149" width="401" height="2" fill="url(#gd)" opacity="0.53"/><rect x="151" y="479" width="340" height="1" fill="url(#gd)" opacity="0.51"/><rect x="123" y="235" width="420" height="1" fill="url(#gl)" opacity="0.30"/><rect x="343" y="190" width="61" height="1" fill="url(#gd)" opacity="0.52"/><rect x="178" y="309" width="305" height="1" fill="url(#gl)" opacity="0.45"/><rect x="6" y="371" width="215" height="2" fill="url(#gd)" opacity="0.22"/><rect x="652" y="332" width="131" height="1" fill="url(#gd)" opacity="0.34"/><rect x="64" y="11" width="96" height="1" fill="url(#gd)" opacity="0.30"/><rect x="724" y="146" width="179" height="2" fill="url(#gl)" opacity="0.38"/><rect x="775" y="213" width="266" height="2" fill="url(#gd)" opacity="0.27"/><rect x="534" y="92" width="340" height="1" fill="url(#gd)" opacity="0.54"/><rect x="393" y="218" width="100" height="2" fill="url(#gd)" opacity="0.38"/><rect x="120" y="121" width="274" height="1" fill="url(#gl)" opacity="0.26"/><rect x="345" y="59" width="299" height="1" fill="url(#gd)" opacity="0.48"/><rect x="402" y="168" width="366" height="2" fill="url(#gd)" opacity="0.20"/><rect x="562" y="479" width="348" height="1" fill="url(#gl)" opacity="0.32"/><rect x="278" y="436" width="406" height="1" fill="url(#gl)" opacity="0.45"/><rect x="-129" y="29" width="372" height="2" fill="url(#gl)" opacity="0.49"/><rect x="372" y="96" width="307" height="1" fill="url(#gl)" opacity="0.56"/><rect x="490" y="425" width="124" height="1" fill="url(#gl)" opacity="0.54"/><rect x="647" y="485" width="329" height="1" fill="url(#gd)" opacity="0.56"/><rect x="282" y="350" width="188" height="1" fill="url(#gd)" opacity="0.53"/><rect x="263" y="505" width="230" height="1" fill="url(#gd)" opacity="0.31"/><rect x="520" y="208" width="312" height="1" fill="url(#gd)" opacity="0.33"/><rect x="-20" y="306" width="360" height="2" fill="url(#gd)" opacity="0.24"/><rect x="590" y="408" width="343" height="1" fill="url(#gd)" opacity="0.42"/><rect x="-39" y="307" width="63" height="1" fill="url(#gl)" opacity="0.53"/><rect x="657" y="61" width="316" height="1" fill="url(#gd)" opacity="0.44"/><rect x="67" y="84" width="80" height="2" fill="url(#gd)" opacity="0.38"/><rect x="529" y="103" width="152" height="1" fill="url(#gd)" opacity="0.37"/><rect x="227" y="13" width="131" height="1" fill="url(#gd)" opacity="0.42"/><rect x="39" y="309" width="275" height="1" fill="url(#gl)" opacity="0.21"/><rect x="359" y="55" width="350" height="2" fill="url(#gd)" opacity="0.53"/><rect x="439" y="431" width="416" height="1" fill="url(#gd)" opacity="0.38"/><rect x="458" y="396" width="363" height="1" fill="url(#gd)" opacity="0.46"/><rect x="411" y="422" width="112" height="2" fill="url(#gl)" opacity="0.39"/><rect x="287" y="15" width="62" height="2" fill="url(#gl)" opacity="0.47"/><rect x="73" y="90" width="122" height="2" fill="url(#gl)" opacity="0.21"/><rect x="311" y="248" width="155" height="2" fill="url(#gd)" opacity="0.35"/><rect x="597" y="148" width="103" height="1" fill="url(#gl)" opacity="0.42"/><rect x="785" y="260" width="86" height="1" fill="url(#gd)" opacity="0.20"/><rect x="248" y="81" width="219" height="2" fill="url(#gl)" opacity="0.44"/><rect x="473" y="498" width="90" height="2" fill="url(#gl)" opacity="0.58"/><rect x="543" y="481" width="145" height="1" fill="url(#gl)" opacity="0.52"/><rect x="494" y="167" width="273" height="1" fill="url(#gl)" opacity="0.51"/><rect x="653" y="278" width="350" height="1" fill="url(#gl)" opacity="0.31"/><rect x="740" y="340" width="370" height="1" fill="url(#gd)" opacity="0.21"/><rect x="448" y="316" width="279" height="1" fill="url(#gd)" opacity="0.30"/><rect x="466" y="385" width="179" height="1" fill="url(#gd)" opacity="0.31"/><rect x="124" y="269" width="276" height="2" fill="url(#gl)" opacity="0.57"/><rect x="145" y="43" width="132" height="1" fill="url(#gd)" opacity="0.55"/><rect x="721" y="280" width="340" height="1" fill="url(#gd)" opacity="0.57"/><rect x="402" y="87" width="343" height="2" fill="url(#gl)" opacity="0.35"/><rect x="166" y="239" width="370" height="2" fill="url(#gl)" opacity="0.36"/><rect x="450" y="260" width="64" height="1" fill="url(#gd)" opacity="0.38"/><rect x="640" y="363" width="92" height="2" fill="url(#gl)" opacity="0.43"/><rect x="338" y="328" width="319" height="1" fill="url(#gd)" opacity="0.28"/><rect x="675" y="185" width="418" height="1" fill="url(#gl)" opacity="0.43"/><rect x="102" y="152" width="82" height="2" fill="url(#gd)" opacity="0.40"/><rect x="497" y="380" width="297" height="1" fill="url(#gd)" opacity="0.26"/><rect x="137" y="353" width="325" height="1" fill="url(#gd)" opacity="0.24"/><rect x="450" y="497" width="350" height="1" fill="url(#gl)" opacity="0.57"/><rect x="819" y="99" width="288" height="2" fill="url(#gd)" opacity="0.53"/><rect x="713" y="260" width="79" height="1" fill="url(#gl)" opacity="0.60"/><rect x="-98" y="28" width="77" height="1" fill="url(#gd)" opacity="0.55"/><rect x="733" y="65" width="366" height="2" fill="url(#gd)" opacity="0.57"/><rect x="113" y="92" width="223" height="2" fill="url(#gd)" opacity="0.46"/><rect x="252" y="518" width="153" height="2" fill="url(#gl)" opacity="0.26"/><rect x="26" y="227" width="79" height="1" fill="url(#gd)" opacity="0.58"/><rect x="707" y="28" width="84" height="2" fill="url(#gl)" opacity="0.41"/><rect x="-93" y="495" width="111" height="2" fill="url(#gl)" opacity="0.50"/><rect x="453" y="305" width="362" height="1" fill="url(#gl)" opacity="0.46"/><rect x="113" y="380" width="259" height="1" fill="url(#gl)" opacity="0.39"/><rect x="676" y="244" width="133" height="1" fill="url(#gd)" opacity="0.56"/><rect x="668" y="199" width="78" height="1" fill="url(#gl)" opacity="0.53"/><rect x="760" y="382" width="131" height="2" fill="url(#gd)" opacity="0.58"/><rect x="712" y="394" width="71" height="1" fill="url(#gd)" opacity="0.38"/><rect x="338" y="239" width="119" height="1" fill="url(#gd)" opacity="0.26"/><rect x="34" y="58" width="291" height="2" fill="url(#gd)" opacity="0.26"/><rect x="278" y="272" width="270" height="1" fill="url(#gl)" opacity="0.21"/><rect x="192" y="303" width="145" height="1" fill="url(#gl)" opacity="0.24"/><rect x="-34" y="494" width="138" height="2" fill="url(#gd)" opacity="0.22"/><rect x="423" y="216" width="304" height="2" fill="url(#gd)" opacity="0.25"/><rect x="292" y="373" width="193" height="1" fill="url(#gd)" opacity="0.57"/><rect x="275" y="296" width="143" height="1" fill="url(#gl)" opacity="0.49"/><rect x="302" y="16" width="319" height="1" fill="url(#gl)" opacity="0.26"/><rect x="40" y="293" width="244" height="1" fill="url(#gl)" opacity="0.56"/><rect x="-9" y="185" width="152" height="1" fill="url(#gd)" opacity="0.29"/><rect x="698" y="81" width="104" height="2" fill="url(#gd)" opacity="0.49"/><rect x="60" y="179" width="130" height="2" fill="url(#gd)" opacity="0.48"/><rect x="57" y="315" width="65" height="1" fill="url(#gl)" opacity="0.49"/><rect x="380" y="56" width="237" height="2" fill="url(#gl)" opacity="0.54"/><rect x="-58" y="504" width="67" height="1" fill="url(#gl)" opacity="0.51"/><rect x="104" y="272" width="155" height="1" fill="url(#gd)" opacity="0.59"/><rect x="438" y="380" width="364" height="2" fill="url(#gd)" opacity="0.34"/><rect x="-77" y="528" width="121" height="2" fill="url(#gl)" opacity="0.30"/><rect x="647" y="328" width="255" height="1" fill="url(#gd)" opacity="0.56"/><rect x="826" y="110" width="313" height="2" fill="url(#gl)" opacity="0.21"/><rect x="-129" y="137" width="184" height="1" fill="url(#gd)" opacity="0.29"/><rect x="169" y="105" width="188" height="1" fill="url(#gd)" opacity="0.58"/><rect x="117" y="199" width="69" height="1" fill="url(#gd)" opacity="0.45"/><rect x="569" y="244" width="287" height="2" fill="url(#gl)" opacity="0.55"/><rect x="129" y="46" width="123" height="2" fill="url(#gl)" opacity="0.43"/><rect x="-26" y="112" width="122" height="1" fill="url(#gl)" opacity="0.25"/><rect x="0" y="232" width="402" height="1" fill="url(#gd)" opacity="0.50"/><rect x="810" y="18" width="385" height="2" fill="url(#gl)" opacity="0.37"/><rect x="255" y="37" width="86" height="1" fill="url(#gd)" opacity="0.34"/><rect x="582" y="343" width="283" height="2" fill="url(#gd)" opacity="0.43"/><rect x="684" y="328" width="265" height="1" fill="url(#gd)" opacity="0.22"/><rect x="105" y="361" width="276" height="1" fill="url(#gd)" opacity="0.20"/><rect x="-80" y="191" width="226" height="1" fill="url(#gl)" opacity="0.40"/><rect x="280" y="142" width="263" height="1" fill="url(#gd)" opacity="0.57"/><rect x="-115" y="41" width="388" height="1" fill="url(#gd)" opacity="0.57"/><rect x="486" y="36" width="111" height="1" fill="url(#gl)" opacity="0.41"/><rect x="144" y="40" width="117" height="1" fill="url(#gl)" opacity="0.46"/><rect x="773" y="526" width="197" height="2" fill="url(#gl)" opacity="0.44"/><rect x="-24" y="450" width="321" height="1" fill="url(#gl)" opacity="0.32"/><rect x="130" y="295" width="184" height="1" fill="url(#gd)" opacity="0.50"/><rect x="474" y="465" width="415" height="1" fill="url(#gd)" opacity="0.46"/><rect x="321" y="375" width="340" height="2" fill="url(#gl)" opacity="0.39"/><rect x="98" y="31" width="230" height="1" fill="url(#gl)" opacity="0.40"/><rect x="-138" y="405" width="240" height="1" fill="url(#gl)" opacity="0.58"/><rect x="353" y="333" width="198" height="1" fill="url(#gl)" opacity="0.60"/><rect x="12" y="22" width="342" height="1" fill="url(#gl)" opacity="0.55"/><rect x="379" y="63" width="258" height="2" fill="url(#gd)" opacity="0.34"/><rect x="832" y="230" width="406" height="1" fill="url(#gd)" opacity="0.26"/><rect x="-7" y="360" width="405" height="1" fill="url(#gl)" opacity="0.44"/><rect x="606" y="97" width="303" height="1" fill="url(#gl)" opacity="0.45"/><rect x="272" y="130" width="112" height="1" fill="url(#gl)" opacity="0.51"/><rect x="257" y="509" width="352" height="1" fill="url(#gl)" opacity="0.54"/><rect x="238" y="113" width="291" height="1" fill="url(#gd)" opacity="0.32"/><rect x="250" y="361" width="329" height="1" fill="url(#gd)" opacity="0.35"/><rect x="239" y="511" width="287" height="2" fill="url(#gl)" opacity="0.41"/><rect x="439" y="446" width="253" height="2" fill="url(#gd)" opacity="0.24"/><rect x="842" y="331" width="371" height="1" fill="url(#gd)" opacity="0.58"/><rect x="762" y="436" width="65" height="2" fill="url(#gl)" opacity="0.30"/><rect x="792" y="307" width="334" height="2" fill="url(#gd)" opacity="0.42"/><rect x="248" y="440" width="297" height="1" fill="url(#gl)" opacity="0.44"/><rect x="542" y="10" width="94" height="1" fill="url(#gd)" opacity="0.24"/><rect x="514" y="410" width="347" height="1" fill="url(#gd)" opacity="0.26"/><rect x="348" y="431" width="265" height="2" fill="url(#gl)" opacity="0.45"/><rect x="558" y="351" width="331" height="1" fill="url(#gd)" opacity="0.24"/><rect x="-74" y="375" width="219" height="2" fill="url(#gd)" opacity="0.24"/><rect x="690" y="351" width="320" height="1" fill="url(#gd)" opacity="0.37"/><rect x="685" y="296" width="321" height="1" fill="url(#gl)" opacity="0.56"/><rect x="495" y="61" width="349" height="2" fill="url(#gd)" opacity="0.34"/><rect x="558" y="43" width="270" height="2" fill="url(#gl)" opacity="0.20"/><rect x="789" y="4" width="215" height="1" fill="url(#gl)" opacity="0.24"/><rect x="51" y="30" width="149" height="1" fill="url(#gl)" opacity="0.42"/><rect x="-3" y="526" width="354" height="1" fill="url(#gl)" opacity="0.44"/><rect x="-41" y="521" width="74" height="1" fill="url(#gl)" opacity="0.27"/><rect x="477" y="478" width="280" height="1" fill="url(#gd)" opacity="0.22"/><rect x="-3" y="330" width="181" height="1" fill="url(#gl)" opacity="0.27"/><rect x="729" y="101" width="358" height="1" fill="url(#gl)" opacity="0.28"/><rect x="-95" y="20" width="172" height="2" fill="url(#gd)" opacity="0.43"/><rect x="-95" y="450" width="377" height="1" fill="url(#gl)" opacity="0.29"/><rect x="172" y="177" width="63" height="1" fill="url(#gd)" opacity="0.53"/><rect x="833" y="258" width="313" height="1" fill="url(#gd)" opacity="0.23"/><rect x="273" y="226" width="218" height="1" fill="url(#gl)" opacity="0.48"/><rect x="-61" y="249" width="148" height="1" fill="url(#gl)" opacity="0.35"/><rect x="255" y="297" width="347" height="2" fill="url(#gl)" opacity="0.33"/><rect x="262" y="343" width="393" height="2" fill="url(#gl)" opacity="0.25"/><rect x="417" y="359" width="185" height="1" fill="url(#gl)" opacity="0.39"/><rect x="-115" y="446" width="202" height="1" fill="url(#gd)" opacity="0.34"/><rect x="-56" y="132" width="160" height="1" fill="url(#gl)" opacity="0.53"/><rect x="328" y="453" width="182" height="2" fill="url(#gl)" opacity="0.34"/><rect x="494" y="385" width="357" height="1" fill="url(#gl)" opacity="0.58"/><rect x="728" y="232" width="291" height="2" fill="url(#gd)" opacity="0.58"/><rect x="451" y="450" width="248" height="1" fill="url(#gd)" opacity="0.36"/><rect x="743" y="128" width="122" height="2" fill="url(#gd)" opacity="0.24"/><rect x="-121" y="394" width="396" height="1" fill="url(#gd)" opacity="0.26"/><rect x="561" y="88" width="150" height="1" fill="url(#gd)" opacity="0.29"/><rect x="-81" y="111" width="347" height="2" fill="url(#gd)" opacity="0.52"/><rect x="-83" y="197" width="219" height="2" fill="url(#gl)" opacity="0.32"/><rect x="139" y="408" width="242" height="2" fill="url(#gl)" opacity="0.56"/><rect x="809" y="135" width="201" height="2" fill="url(#gl)" opacity="0.35"/><rect x="768" y="359" width="271" height="1" fill="url(#gl)" opacity="0.48"/><rect x="210" y="410" width="381" height="1" fill="url(#gl)" opacity="0.32"/><rect x="579" y="224" width="406" height="1" fill="url(#gl)" opacity="0.22"/><rect x="625" y="202" width="215" height="1" fill="url(#gl)" opacity="0.50"/><rect x="428" y="183" width="176" height="1" fill="url(#gd)" opacity="0.49"/><rect x="536" y="445" width="410" height="1" fill="url(#gd)" opacity="0.57"/><rect x="772" y="293" width="81" height="1" fill="url(#gd)" opacity="0.43"/><rect x="547" y="250" width="116" height="2" fill="url(#gl)" opacity="0.33"/><rect x="617" y="353" width="104" height="2" fill="url(#gl)" opacity="0.50"/><rect x="137" y="226" width="329" height="1" fill="url(#gl)" opacity="0.58"/><rect x="558" y="348" width="317" height="1" fill="url(#gd)" opacity="0.53"/><rect x="370" y="463" width="87" height="1" fill="url(#gd)" opacity="0.28"/><rect x="351" y="130" width="156" height="2" fill="url(#gl)" opacity="0.48"/><rect x="28" y="267" width="339" height="1" fill="url(#gl)" opacity="0.51"/><rect x="105" y="266" width="90" height="1" fill="url(#gl)" opacity="0.34"/><rect x="-10" y="318" width="129" height="1" fill="url(#gd)" opacity="0.39"/><rect x="-144" y="247" width="323" height="1" fill="url(#gd)" opacity="0.25"/><rect x="-14" y="306" width="132" height="1" fill="url(#gd)" opacity="0.30"/><rect x="411" y="120" width="277" height="1" fill="url(#gd)" opacity="0.27"/><rect x="709" y="472" width="267" height="1" fill="url(#gd)" opacity="0.25"/><rect x="348" y="369" width="165" height="1" fill="url(#gl)" opacity="0.56"/><rect x="568" y="113" width="218" height="1" fill="url(#gl)" opacity="0.25"/><rect x="432" y="479" width="245" height="1" fill="url(#gl)" opacity="0.42"/><rect x="618" y="479" width="308" height="2" fill="url(#gl)" opacity="0.49"/><rect x="-39" y="270" width="390" height="1" fill="url(#gl)" opacity="0.37"/><rect x="-142" y="329" width="243" height="1" fill="url(#gd)" opacity="0.46"/><rect x="518" y="257" width="185" height="1" fill="url(#gl)" opacity="0.50"/><rect x="709" y="404" width="134" height="1" fill="url(#gl)" opacity="0.27"/><rect x="-46" y="172" width="218" height="1" fill="url(#gd)" opacity="0.33"/><rect x="177" y="364" width="177" height="1" fill="url(#gl)" opacity="0.42"/><rect x="95" y="259" width="89" height="1" fill="url(#gl)" opacity="0.43"/><rect x="776" y="412" width="85" height="1" fill="url(#gd)" opacity="0.40"/><rect x="156" y="161" width="368" height="1" fill="url(#gd)" opacity="0.23"/><rect x="-9" y="167" width="286" height="2" fill="url(#gd)" opacity="0.36"/><rect x="340" y="450" width="157" height="1" fill="url(#gl)" opacity="0.35"/><rect x="285" y="523" width="133" height="1" fill="url(#gl)" opacity="0.46"/><rect x="761" y="431" width="233" height="2" fill="url(#gl)" opacity="0.20"/><rect x="775" y="180" width="144" height="2" fill="url(#gl)" opacity="0.20"/><rect x="431" y="356" width="160" height="1" fill="url(#gl)" opacity="0.42"/><rect x="397" y="438" width="380" height="2" fill="url(#gd)" opacity="0.59"/><rect x="680" y="83" width="90" height="1" fill="url(#gd)" opacity="0.33"/><rect x="825" y="431" width="248" height="1" fill="url(#gl)" opacity="0.46"/><rect x="393" y="351" width="384" height="1" fill="url(#gl)" opacity="0.28"/><rect x="557" y="458" width="103" height="1" fill="url(#gl)" opacity="0.43"/><rect x="218" y="426" width="331" height="1" fill="url(#gl)" opacity="0.38"/><rect x="34" y="232" width="163" height="2" fill="url(#gd)" opacity="0.24"/><rect x="515" y="259" width="108" height="2" fill="url(#gl)" opacity="0.47"/><rect x="417" y="232" width="294" height="1" fill="url(#gl)" opacity="0.43"/><rect x="781" y="525" width="361" height="1" fill="url(#gd)" opacity="0.54"/><rect x="-13" y="450" width="317" height="2" fill="url(#gd)" opacity="0.49"/><rect x="491" y="117" width="323" height="1" fill="url(#gl)" opacity="0.53"/><rect x="841" y="175" width="158" height="1" fill="url(#gd)" opacity="0.51"/><rect x="264" y="58" width="181" height="2" fill="url(#gl)" opacity="0.22"/><rect x="320" y="218" width="213" height="2" fill="url(#gl)" opacity="0.25"/><rect x="486" y="89" width="163" height="2" fill="url(#gd)" opacity="0.57"/><rect x="225" y="172" width="234" height="1" fill="url(#gd)" opacity="0.49"/><rect x="-25" y="261" width="182" height="2" fill="url(#gl)" opacity="0.49"/><rect x="-106" y="500" width="369" height="1" fill="url(#gl)" opacity="0.34"/><rect x="-116" y="115" width="405" height="1" fill="url(#gl)" opacity="0.34"/><rect x="708" y="21" width="357" height="1" fill="url(#gl)" opacity="0.52"/><rect x="669" y="75" width="192" height="1" fill="url(#gl)" opacity="0.42"/><rect x="706" y="389" width="133" height="2" fill="url(#gd)" opacity="0.30"/><rect x="821" y="275" width="287" height="1" fill="url(#gl)" opacity="0.34"/><rect x="345" y="513" width="76" height="1" fill="url(#gd)" opacity="0.21"/><rect x="713" y="401" width="303" height="1" fill="url(#gd)" opacity="0.48"/><rect x="743" y="234" width="372" height="1" fill="url(#gd)" opacity="0.34"/><rect x="765" y="318" width="127" height="1" fill="url(#gd)" opacity="0.22"/><rect x="594" y="369" width="299" height="2" fill="url(#gl)" opacity="0.39"/><rect x="-144" y="321" width="231" height="1" fill="url(#gd)" opacity="0.33"/><rect x="747" y="470" width="371" height="1" fill="url(#gl)" opacity="0.26"/><rect x="243" y="279" width="199" height="1" fill="url(#gl)" opacity="0.60"/><rect x="565" y="142" width="77" height="1" fill="url(#gd)" opacity="0.56"/><rect x="642" y="204" width="278" height="1" fill="url(#gd)" opacity="0.45"/><rect x="662" y="288" width="181" height="1" fill="url(#gd)" opacity="0.58"/><rect x="836" y="311" width="234" height="1" fill="url(#gd)" opacity="0.40"/><rect x="743" y="358" width="341" height="2" fill="url(#gd)" opacity="0.33"/><rect x="754" y="330" width="306" height="2" fill="url(#gd)" opacity="0.56"/><rect x="4" y="357" width="129" height="1" fill="url(#gl)" opacity="0.56"/><rect x="306" y="414" width="262" height="1" fill="url(#gd)" opacity="0.32"/><rect x="-3" y="67" width="214" height="1" fill="url(#gd)" opacity="0.30"/><rect x="-75" y="348" width="157" height="1" fill="url(#gd)" opacity="0.23"/><rect x="329" y="361" width="242" height="2" fill="url(#gd)" opacity="0.48"/><rect x="708" y="69" width="308" height="2" fill="url(#gl)" opacity="0.27"/><rect x="626" y="23" width="144" height="1" fill="url(#gd)" opacity="0.29"/><rect x="259" y="48" width="289" height="2" fill="url(#gl)" opacity="0.44"/><rect x="51" y="101" width="183" height="1" fill="url(#gd)" opacity="0.59"/><rect x="-75" y="81" width="354" height="1" fill="url(#gl)" opacity="0.25"/><rect x="505" y="15" width="225" height="1" fill="url(#gd)" opacity="0.28"/><rect x="514" y="27" width="308" height="1" fill="url(#gl)" opacity="0.47"/><rect x="734" y="58" width="272" height="1" fill="url(#gd)" opacity="0.23"/><rect x="462" y="506" width="264" height="1" fill="url(#gl)" opacity="0.39"/><rect x="427" y="324" width="394" height="1" fill="url(#gd)" opacity="0.22"/><rect x="10" y="337" width="107" height="1" fill="url(#gl)" opacity="0.28"/><rect x="216" y="92" width="245" height="1" fill="url(#gl)" opacity="0.42"/><rect x="523" y="157" width="368" height="1" fill="url(#gd)" opacity="0.29"/><rect x="631" y="489" width="76" height="2" fill="url(#gd)" opacity="0.32"/><rect x="422" y="464" width="202" height="1" fill="url(#gl)" opacity="0.41"/><rect x="-141" y="258" width="345" height="2" fill="url(#gl)" opacity="0.46"/><rect x="4" y="371" width="381" height="1" fill="url(#gl)" opacity="0.50"/><rect x="489" y="28" width="128" height="1" fill="url(#gl)" opacity="0.42"/><rect x="115" y="186" width="370" height="1" fill="url(#gl)" opacity="0.26"/><rect x="391" y="165" width="74" height="1" fill="url(#gl)" opacity="0.48"/><rect x="68" y="510" width="385" height="1" fill="url(#gd)" opacity="0.56"/><rect x="181" y="217" width="73" height="1" fill="url(#gl)" opacity="0.49"/><rect x="540" y="411" width="239" height="1" fill="url(#gl)" opacity="0.43"/><rect x="817" y="384" width="396" height="1" fill="url(#gd)" opacity="0.29"/><rect x="576" y="268" width="282" height="1" fill="url(#gl)" opacity="0.34"/><rect x="508" y="435" width="202" height="1" fill="url(#gl)" opacity="0.60"/><rect x="338" y="160" width="196" height="1" fill="url(#gd)" opacity="0.25"/><rect x="189" y="90" width="62" height="1" fill="url(#gl)" opacity="0.56"/><rect x="67" y="463" width="356" height="2" fill="url(#gl)" opacity="0.51"/><rect x="-103" y="369" width="284" height="2" fill="url(#gl)" opacity="0.55"/><rect x="551" y="304" width="72" height="2" fill="url(#gd)" opacity="0.26"/><rect x="783" y="136" width="214" height="1" fill="url(#gl)" opacity="0.49"/><rect x="325" y="172" width="409" height="1" fill="url(#gl)" opacity="0.37"/><rect x="753" y="406" width="231" height="1" fill="url(#gd)" opacity="0.21"/><rect x="-112" y="15" width="129" height="1" fill="url(#gd)" opacity="0.29"/><rect x="595" y="107" width="70" height="1" fill="url(#gl)" opacity="0.56"/><rect x="-27" y="112" width="309" height="1" fill="url(#gd)" opacity="0.41"/><rect x="551" y="229" width="336" height="1" fill="url(#gl)" opacity="0.50"/><rect x="392" y="115" width="241" height="1" fill="url(#gd)" opacity="0.58"/><rect x="723" y="220" width="174" height="1" fill="url(#gd)" opacity="0.31"/><rect x="125" y="270" width="95" height="1" fill="url(#gd)" opacity="0.28"/><rect x="123" y="371" width="65" height="1" fill="url(#gl)" opacity="0.22"/><rect x="411" y="288" width="229" height="2" fill="url(#gd)" opacity="0.59"/><rect x="258" y="275" width="276" height="2" fill="url(#gl)" opacity="0.37"/><rect x="629" y="396" width="257" height="2" fill="url(#gd)" opacity="0.52"/><rect x="94" y="5" width="371" height="1" fill="url(#gd)" opacity="0.60"/><rect x="96" y="386" width="161" height="1" fill="url(#gd)" opacity="0.23"/><rect x="780" y="34" width="85" height="1" fill="url(#gl)" opacity="0.42"/><rect x="412" y="453" width="402" height="1" fill="url(#gl)" opacity="0.59"/><rect x="372" y="481" width="235" height="1" fill="url(#gd)" opacity="0.60"/><rect x="213" y="387" width="92" height="1" fill="url(#gl)" opacity="0.41"/><rect x="-77" y="329" width="381" height="2" fill="url(#gd)" opacity="0.47"/><rect x="118" y="271" width="302" height="1" fill="url(#gd)" opacity="0.34"/><rect x="-5" y="226" width="93" height="1" fill="url(#gd)" opacity="0.41"/><rect x="682" y="173" width="247" height="2" fill="url(#gl)" opacity="0.27"/><rect x="31" y="471" width="387" height="1" fill="url(#gd)" opacity="0.54"/><rect x="179" y="44" width="255" height="1" fill="url(#gl)" opacity="0.55"/><rect x="7" y="419" width="419" height="1" fill="url(#gl)" opacity="0.24"/><rect x="313" y="309" width="399" height="2" fill="url(#gl)" opacity="0.36"/><rect x="310" y="114" width="384" height="2" fill="url(#gl)" opacity="0.52"/><rect x="-144" y="153" width="408" height="1" fill="url(#gl)" opacity="0.40"/><rect x="385" y="379" width="234" height="1" fill="url(#gd)" opacity="0.30"/><rect x="434" y="0" width="192" height="2" fill="url(#gl)" opacity="0.27"/><rect x="788" y="281" width="225" height="1" fill="url(#gl)" opacity="0.31"/><rect x="729" y="505" width="105" height="2" fill="url(#gl)" opacity="0.37"/><rect x="792" y="380" width="82" height="1" fill="url(#gd)" opacity="0.35"/><rect x="267" y="302" width="280" height="1" fill="url(#gd)" opacity="0.52"/><rect x="720" y="394" width="356" height="2" fill="url(#gl)" opacity="0.45"/><rect x="-86" y="381" width="400" height="1" fill="url(#gl)" opacity="0.54"/><rect x="238" y="456" width="261" height="2" fill="url(#gd)" opacity="0.40"/><rect x="-40" y="26" width="363" height="2" fill="url(#gd)" opacity="0.57"/><rect x="274" y="446" width="302" height="1" fill="url(#gl)" opacity="0.23"/><rect x="374" y="138" width="64" height="1" fill="url(#gd)" opacity="0.50"/><rect x="797" y="41" width="408" height="1" fill="url(#gl)" opacity="0.33"/><rect x="-30" y="470" width="106" height="2" fill="url(#gl)" opacity="0.23"/><rect x="358" y="104" width="105" height="1" fill="url(#gd)" opacity="0.29"/><rect x="578" y="204" width="231" height="1" fill="url(#gl)" opacity="0.22"/><rect x="713" y="427" width="358" height="1" fill="url(#gl)" opacity="0.36"/><rect x="178" y="149" width="231" height="1" fill="url(#gl)" opacity="0.59"/><rect x="382" y="281" width="194" height="1" fill="url(#gl)" opacity="0.35"/><rect x="419" y="305" width="262" height="1" fill="url(#gd)" opacity="0.37"/><rect x="104" y="311" width="254" height="1" fill="url(#gd)" opacity="0.54"/><rect x="-16" y="206" width="86" height="2" fill="url(#gl)" opacity="0.46"/><rect x="576" y="500" width="358" height="1" fill="url(#gl)" opacity="0.57"/><rect x="791" y="467" width="344" height="1" fill="url(#gd)" opacity="0.49"/><rect x="268" y="69" width="349" height="1" fill="url(#gd)" opacity="0.21"/><rect x="148" y="449" width="162" height="1" fill="url(#gd)" opacity="0.52"/><rect x="265" y="465" width="287" height="1" fill="url(#gl)" opacity="0.28"/><rect x="-100" y="127" width="130" height="1" fill="url(#gd)" opacity="0.23"/><rect x="-136" y="184" width="347" height="1" fill="url(#gd)" opacity="0.27"/><rect x="671" y="301" width="168" height="2" fill="url(#gd)" opacity="0.26"/><rect x="378" y="211" width="111" height="1" fill="url(#gl)" opacity="0.28"/><rect x="274" y="51" width="174" height="2" fill="url(#gd)" opacity="0.30"/></svg>
<div id="tbar" class="a"></div>
<div id="tline" class="a"></div>
<svg class="a" style="left:18px;top:47px" width="842" height="36">
 <!-- play -->
 <path d="M14 14L22 18L14 22Z" fill="#000"/>
 <!-- separators -->
 <path d="M38.5 8V28M137.5 8V28M207.5 8V28M364.5 8V28M405.5 8V28" stroke="#c9c9cc" stroke-width="1"/>
 <!-- zoom in -->
 <g fill="none" stroke="#000">
  <circle cx="58" cy="16.8" r="4.5" stroke-width="1.3"/>
  <path d="M61 20L65 23.6" stroke-width="2.2"/>
  <path d="M55 16.8H61M58 13.8V19.8" stroke-width="2"/>
  <circle cx="87" cy="16.8" r="4.5" stroke-width="1.3"/>
  <path d="M90 20L94 23.6" stroke-width="2.2"/>
  <path d="M84 16.8H90" stroke-width="2"/>
 </g>
 <!-- fit -->
 <rect x="109" y="13" width="16" height="11" fill="#fff"/>
 <rect x="110" y="14" width="14" height="9" fill="#000"/>
 <rect x="112" y="15" width="11" height="7" fill="#fff"/>
 <path d="M112 15.2L113.2 16.2L114.5 16.6L115.2 15.8L116 17.2L117 17.6L117.8 16.4L118.6 17.9L123 17.9V19.1L118.6 19.1L117.8 20.6L117 19.4L116 19.8L115.2 21.2L114.5 20.4L113.2 20.8L112 21.8Z" fill="#000"/>
 <!-- undo redo -->
 <g fill="none" stroke="#a9a9a9" stroke-width="1.2">
  <path d="M156.3 19.3A3.8 3.8 0 1 1 159.9 22.4"/>
  <path d="M189 19.3A3.8 3.8 0 1 0 185.4 22.4"/>
 </g>
 <path d="M152 15.9V20.9H157Z" fill="#a9a9a9"/>
 <path d="M193.1 15.9V20.9H188.1Z" fill="#a9a9a9"/>
 <!-- volume -->
 <rect x="224.5" y="11.5" width="2" height="13" fill="#fff" stroke="#000" stroke-width="1"/>
 <rect x="221.5" y="15.5" width="8" height="4" rx="0.8" fill="#e8e8e8" stroke="#000" stroke-width="1"/>
 <path d="M232.5 13.5V23" stroke="#0000c8" stroke-width="1.3"/>
 <path d="M229.7 14.5L232.5 10.8L235.3 14.5Z M229.7 22L232.5 25.2L235.3 22Z" fill="#0000c8"/>
 <!-- fade in -->
 <rect x="250.5" y="14.5" width="13" height="8" fill="#fff" stroke="#000" stroke-width="1.4"/>
 <path d="M251 22.5L263.5 14.5V22.5Z" fill="none"/>
 <path d="M252 21.5L262.5 15" stroke="#000" stroke-width="1.2"/>
 <!-- fade out -->
 <rect x="279.5" y="14.5" width="13" height="8" fill="#fff" stroke="#000" stroke-width="1.4"/>
 <path d="M281 15L291.5 21.5" stroke="#000" stroke-width="1.2"/>
 <!-- crossfade -->
 <path d="M308.5 14V22.5H321.5V14" fill="none" stroke="#000" stroke-width="1.4"/>
 <path d="M308.5 15.5L321.5 21.5M308.5 21.5L321.5 15.5" stroke="#000" stroke-width="1"/>
 <!-- bowtie -->
 <path d="M337 14.5L339.6 15.6L341.8 17.1L346.8 17.1L349 15.6L351.2 14.5V22L349 20.9L346.8 19.8L341.8 19.8L339.6 20.9L337 22Z" fill="#000"/>
 <!-- back arrow -->
 <path d="M380 14.5L385.5 18.5L380 22Z" fill="#000" transform="matrix(-1 0 0 1 764 0)"/>
 <path d="M382 18.5H391" stroke="#000" stroke-width="1.5"/>
 <!-- trim -->
 <rect x="418.5" y="13.5" width="15" height="10" fill="#fff" stroke="#000" stroke-width="1.4"/>
 <path d="M421.5 13.5V23.5M430.5 13.5V23.5" stroke="#000" stroke-width="1.2"/>
 <path d="M423 16L426.5 18.5L423 21Z" fill="#0000c8"/>
 <path d="M424 18.5H430M426.5 16.5V20.5" stroke="#0000c8" stroke-width="1"/>
</svg>

<div id="panel" class="a"></div>
<div id="info" class="a">Sample Length: 51152   Format: 44100Hz 16bit stereo   Duration: 0:01 sec</div>
<div id="wbox" class="a"></div>
<div id="ch1" class="a"></div>
<div id="ch2" class="a"></div>
<div class="a grid" style="top:173px"></div>
<div class="a grid" style="top:272px"></div>
<div class="a grid" style="top:370px"></div>
<div class="a grid" style="top:469px"></div>
<svg class="a" style="left:0;top:0" width="881" height="636" shape-rendering="crispEdges">
 <path d="M591.5 124V519" stroke="#72a9dd" stroke-width="1"/>
 <path d="M43.5 208.9V249.8M44.5 211.2V250.7M45.5 204.1V244.6M46.5 213.5V244.0M47.5 206.7V233.1M48.5 202.0V234.3M49.5 209.8V241.9M50.5 213.6V253.7M51.5 200.7V232.5M52.5 211.1V255.2M53.5 201.8V235.5M54.5 208.1V256.2M55.5 202.8V238.9M56.5 210.5V256.6M57.5 210.0V256.8M58.5 201.4V240.7M59.5 205.8V250.0M60.5 211.6V254.0M61.5 201.9V238.1M62.5 206.4V245.3M63.5 206.7V248.1M64.5 202.8V249.8M65.5 210.2V253.5M66.5 203.4V239.3M67.5 211.5V254.9M68.5 213.1V244.4M69.5 204.3V234.3M70.5 212.9V255.6M71.5 215.1V254.9M72.5 204.7V250.1M73.5 213.6V251.8M74.5 209.7V253.1M75.5 204.7V230.1M76.5 210.7V243.0M77.5 212.3V249.2M78.5 204.7V233.1M79.5 207.1V247.5M80.5 216.4V238.4M81.5 201.1V236.1M82.5 209.7V251.8M83.5 196.6V242.9M84.5 190.2V244.9M85.5 197.1V255.6M86.5 194.3V243.6M87.5 193.5V236.8M88.5 194.5V255.6M89.5 188.5V241.8M90.5 210.1V255.6M91.5 191.3V233.7M92.5 191.2V243.1M93.5 203.7V250.8M94.5 190.3V254.3M95.5 188.6V239.3M96.5 201.3V253.7M97.5 187.9V243.9M98.5 190.4V234.7M99.5 194.3V244.5M100.5 186.9V236.2M101.5 211.7V249.1M102.5 194.4V254.1M103.5 201.3V254.9M104.5 193.4V247.3M105.5 187.6V238.2M106.5 210.7V257.3M107.5 187.9V239.2M108.5 204.7V259.0M109.5 196.0V244.0M110.5 192.3V255.1M111.5 202.4V255.8M112.5 196.0V250.7M113.5 183.7V240.6M114.5 208.1V256.5M115.5 180.7V237.0M116.5 182.5V254.4M117.5 197.0V248.7M118.5 177.3V235.1M119.5 199.4V256.1M120.5 173.0V234.1M121.5 191.9V255.7M122.5 186.6V249.5M123.5 175.8V236.1M124.5 209.6V251.6M125.5 186.4V244.0M126.5 178.5V231.9M127.5 199.3V256.8M128.5 181.4V237.0M129.5 199.1V256.8M130.5 182.2V246.3M131.5 201.4V256.1M132.5 183.8V237.8M133.5 208.0V252.8M134.5 185.5V235.8M135.5 206.9V251.1M136.5 195.5V250.3M137.5 189.0V230.4M138.5 202.6V244.5M139.5 199.4V233.9M140.5 190.4V235.1M141.5 211.1V243.3M142.5 193.8V235.1M143.5 213.5V244.7M144.5 204.3V244.4M145.5 199.0V232.0M146.5 214.3V243.8M147.5 202.5V234.5M148.5 216.4V243.1M149.5 209.1V234.6M150.5 209.2V238.0M151.5 218.8V242.5M152.5 208.9V233.7M153.5 215.6V242.4M154.5 210.2V234.1M155.5 215.5V241.4M156.5 212.5V254.3M157.5 195.0V239.5M158.5 209.9V277.9M159.5 190.8V283.1M160.5 165.9V262.4M161.5 202.8V300.1M162.5 168.1V274.3M163.5 181.8V297.2M164.5 177.3V268.1M165.5 160.5V268.8M166.5 189.8V292.9M167.5 183.0V277.9M168.5 168.3V238.4M169.5 204.4V288.1M170.5 174.1V252.2M171.5 195.2V254.2M172.5 183.5V261.6M173.5 169.3V264.2M174.5 193.6V252.0M175.5 164.5V243.3M176.5 199.9V292.0M177.5 168.9V258.4M178.5 177.7V288.4M179.5 192.9V287.9M180.5 175.7V281.1M181.5 200.9V275.4M182.5 178.2V258.5M183.5 204.4V278.5M184.5 180.7V243.8M185.5 201.5V266.2M186.5 184.1V263.2M187.5 184.5V239.7M188.5 203.4V273.4M189.5 198.2V251.8M190.5 196.1V270.0M191.5 212.6V269.0M192.5 189.4V249.9M193.5 214.1V267.0M194.5 190.5V255.3M195.5 202.8V246.7M196.5 191.4V250.1M197.5 200.3V242.1M198.5 211.0V261.8M199.5 192.9V236.1M200.5 193.4V234.8M201.5 208.9V256.5M202.5 199.9V259.1M203.5 203.3V258.8M204.5 215.3V258.5M205.5 197.6V238.2M206.5 209.2V255.0M207.5 198.1V253.4M208.5 206.9V248.3M209.5 206.6V256.9M210.5 199.6V240.8M211.5 215.5V256.3M212.5 204.6V246.9M213.5 210.6V254.3M214.5 205.0V253.2M215.5 198.8V243.4M216.5 211.3V254.6M217.5 198.6V234.4M218.5 198.5V250.9M219.5 211.4V250.8M220.5 198.7V242.3M221.5 192.6V262.1M222.5 189.2V259.5M223.5 155.8V264.8M224.5 154.8V253.7M225.5 190.4V270.3M226.5 126.6V271.6M227.5 181.6V276.1M228.5 130.0V271.8M229.5 188.6V299.0M230.5 127.4V252.2M231.5 137.8V270.8M232.5 163.4V257.4M233.5 122.7V263.1M234.5 177.7V302.2M235.5 123.2V252.7M236.5 186.0V289.6M237.5 161.9V267.4M238.5 139.1V262.9M239.5 194.7V300.3M240.5 181.0V299.7M241.5 151.3V299.4M242.5 179.7V289.4M243.5 153.8V276.0M244.5 176.5V299.7M245.5 160.9V258.5M246.5 195.5V288.3M247.5 158.1V256.0M248.5 171.8V263.4M249.5 204.1V282.9M250.5 162.1V237.5M251.5 204.2V279.3M252.5 173.4V277.5M253.5 163.3V263.8M254.5 194.4V273.9M255.5 165.0V257.3M256.5 203.2V270.3M257.5 168.6V240.3M258.5 199.6V258.7M259.5 174.1V236.9M260.5 209.3V251.7M261.5 179.5V239.8M262.5 200.0V259.8M263.5 187.1V239.1M264.5 186.6V239.7M265.5 211.3V250.4M266.5 188.3V241.4M267.5 203.7V254.5M268.5 191.4V236.5M269.5 205.8V252.2M270.5 205.6V247.5M271.5 199.4V230.4M272.5 209.6V248.4M273.5 202.6V241.7M274.5 207.2V241.9M275.5 200.1V238.9M276.5 198.1V229.6M277.5 202.1V242.7M278.5 199.4V244.8M279.5 182.2V254.9M280.5 194.5V265.5M281.5 179.7V252.3M282.5 174.1V250.6M283.5 196.6V260.6M284.5 175.6V245.3M285.5 197.0V263.5M286.5 186.7V246.1M287.5 177.9V270.3M288.5 203.0V265.5M289.5 179.4V237.0M290.5 198.3V279.7M291.5 181.3V258.3M292.5 200.6V268.4M293.5 199.1V281.1M294.5 178.4V275.6M295.5 204.1V282.0M296.5 194.2V282.4M297.5 177.1V258.8M298.5 211.2V281.3M299.5 178.1V254.1M300.5 192.2V258.6M301.5 210.7V276.6M302.5 179.7V238.9M303.5 187.0V266.8M304.5 208.4V270.5M305.5 186.0V268.9M306.5 184.2V241.1M307.5 210.3V264.3M308.5 190.2V259.1M309.5 193.2V234.2M310.5 209.2V258.3M311.5 192.8V247.3M312.5 195.9V240.6M313.5 202.3V248.3M314.5 200.5V242.3M315.5 212.5V253.5M316.5 202.0V234.0M317.5 216.3V250.2M318.5 204.1V243.1M319.5 210.5V240.0M320.5 210.7V249.0M321.5 206.9V237.7M322.5 212.0V246.3M323.5 204.7V235.9M324.5 216.0V246.0M325.5 211.4V242.4M326.5 204.7V235.0M327.5 208.4V244.2M328.5 209.8V241.5M329.5 203.8V237.7M330.5 217.6V242.5M331.5 211.2V231.5M332.5 201.2V231.7M333.5 205.9V240.9M334.5 204.5V232.5M335.5 201.2V229.2M336.5 215.1V236.6M337.5 204.4V229.6M338.5 207.7V228.3M339.5 213.3V233.5M340.5 186.8V239.1M341.5 188.4V258.9M342.5 184.9V244.2M343.5 167.0V256.6M344.5 181.0V263.0M345.5 159.8V246.9M346.5 189.6V266.8M347.5 166.6V264.0M348.5 156.1V234.7M349.5 165.5V251.8M350.5 180.4V273.4M351.5 174.5V274.1M352.5 174.2V265.9M353.5 150.4V267.7M354.5 196.6V275.9M355.5 148.6V244.2M356.5 186.1V277.4M357.5 154.2V249.7M358.5 185.2V278.9M359.5 196.9V279.7M360.5 161.8V240.3M361.5 180.6V277.9M362.5 185.1V277.0M363.5 167.9V245.4M364.5 189.7V251.4M365.5 201.0V258.9M366.5 174.1V252.2M367.5 208.2V270.6M368.5 181.9V259.6M369.5 176.3V248.3M370.5 204.3V271.3M371.5 177.3V240.6M372.5 187.4V239.6M373.5 185.2V264.2M374.5 180.1V237.1M375.5 198.2V265.0M376.5 196.9V247.7M377.5 183.3V244.8M378.5 204.1V259.8M379.5 185.8V241.8M380.5 183.1V248.0M381.5 211.4V258.4M382.5 184.0V241.1M383.5 190.2V257.5M384.5 209.4V250.3M385.5 187.4V247.7M386.5 204.4V255.3M387.5 198.5V253.1M388.5 190.1V248.5M389.5 213.6V254.5M390.5 202.6V242.1M391.5 195.0V244.6M392.5 209.9V247.5M393.5 197.2V239.0M394.5 200.0V236.9M395.5 208.9V249.3M396.5 204.1V236.6M397.5 201.6V231.4M398.5 205.3V248.0M399.5 205.1V238.9M400.5 197.5V234.2M401.5 205.2V250.0M402.5 194.8V230.7M403.5 210.7V251.9M404.5 194.2V240.0M405.5 209.2V251.9M406.5 211.1V244.6M407.5 193.4V234.6M408.5 209.1V251.9M409.5 196.4V248.2M410.5 199.0V246.2M411.5 207.3V251.6M412.5 195.0V230.1M413.5 211.8V251.1M414.5 195.8V234.4M415.5 195.5V241.7M416.5 212.5V250.3M417.5 199.2V242.8M418.5 197.4V249.2M419.5 206.7V241.4M420.5 195.0V232.1M421.5 198.7V247.3M422.5 201.8V244.7M423.5 202.2V231.8M424.5 211.5V251.5M425.5 196.9V239.6M426.5 201.6V236.4M427.5 199.5V250.8M428.5 198.0V243.4M429.5 209.9V247.4M430.5 206.1V249.8M431.5 198.2V233.9M432.5 213.0V247.6M433.5 203.1V248.2M434.5 205.7V240.8M435.5 212.1V247.2M436.5 201.8V238.8M437.5 212.3V247.2M438.5 202.2V236.9M439.5 211.4V247.2M440.5 207.2V246.0M441.5 202.6V230.1M442.5 210.0V246.0M443.5 204.4V239.8M444.5 207.2V243.3M445.5 215.8V244.2M446.5 202.6V232.0M447.5 205.7V235.8M448.5 210.1V245.5M449.5 202.2V230.4M450.5 210.3V245.6M451.5 210.0V248.1M452.5 204.7V237.8M453.5 212.1V248.6M454.5 202.2V245.4M455.5 215.8V251.4M456.5 206.8V242.7M457.5 201.6V236.3M458.5 211.7V252.9M459.5 208.1V247.6M460.5 201.8V239.4M461.5 210.4V250.2M462.5 205.0V243.8M463.5 203.8V240.0M464.5 217.4V247.9M465.5 203.5V237.9M466.5 214.5V232.4M467.5 212.5V243.0M468.5 204.8V232.0M469.5 213.7V237.0M470.5 214.1V236.7M471.5 199.2V235.7M472.5 209.9V252.1M473.5 205.0V259.8M474.5 176.1V241.3M475.5 184.3V245.2M476.5 166.2V237.5M477.5 165.6V238.0M478.5 199.0V265.5M479.5 157.7V247.0M480.5 187.8V266.2M481.5 162.0V235.1M482.5 157.7V252.0M483.5 186.8V256.2M484.5 155.3V245.1M485.5 169.3V243.5M486.5 187.8V256.3M487.5 158.5V244.6M488.5 198.9V270.9M489.5 171.1V270.9M490.5 168.5V266.5M491.5 185.5V272.8M492.5 162.8V258.3M493.5 182.2V273.4M494.5 185.7V273.4M495.5 168.6V254.1M496.5 183.3V254.3M497.5 200.7V273.4M498.5 178.0V239.4M499.5 208.2V271.4M500.5 174.1V258.5M501.5 191.1V275.5M502.5 191.3V268.3M503.5 175.9V254.0M504.5 202.0V257.3M505.5 199.7V272.6M506.5 179.6V239.0M507.5 198.9V268.7M508.5 182.2V255.4M509.5 190.5V241.0M510.5 209.6V262.9M511.5 186.8V246.0M512.5 200.5V248.4M513.5 204.6V253.2M514.5 195.3V250.5M515.5 195.6V242.2M516.5 216.0V252.6M517.5 198.5V238.5M518.5 211.0V249.0M519.5 208.9V246.0M520.5 199.8V244.1M521.5 211.7V243.1M522.5 194.7V234.7M523.5 197.5V253.5M524.5 202.0V249.6M525.5 186.7V248.4M526.5 199.3V256.1M527.5 191.1V233.7M528.5 203.4V245.5M529.5 196.0V241.6M530.5 194.9V233.1M531.5 209.2V253.5M532.5 195.2V245.3M533.5 211.6V253.5M534.5 191.6V235.1M535.5 210.6V253.5M536.5 189.4V233.5M537.5 188.3V231.0M538.5 205.1V253.5M539.5 187.9V239.2M540.5 194.5V245.5M541.5 208.5V253.5M542.5 187.3V251.5M543.5 187.1V246.5M544.5 203.7V253.5M545.5 186.6V236.6M546.5 202.6V252.0M547.5 187.6V244.7M548.5 186.0V233.6M549.5 202.4V241.2M550.5 185.3V233.8M551.5 205.9V250.2M552.5 206.7V250.3M553.5 187.7V229.5M554.5 203.5V249.4M555.5 189.4V241.4M556.5 194.1V239.6M557.5 204.1V249.9M558.5 191.5V232.2M559.5 208.2V249.0M560.5 199.4V243.5M561.5 194.6V238.7M562.5 201.3V247.6M563.5 195.0V232.2M564.5 213.5V245.0M565.5 196.5V230.6M566.5 197.3V245.4M567.5 211.2V234.3M568.5 198.8V229.9M569.5 215.7V243.6M570.5 204.8V243.3M571.5 202.3V231.6M572.5 208.3V243.6M573.5 200.9V235.5M574.5 212.2V236.8M575.5 206.5V243.6M576.5 200.0V230.9M577.5 208.7V245.5M578.5 209.3V244.1M579.5 195.1V237.2M580.5 197.4V243.3M581.5 200.3V247.7M582.5 190.2V232.1M583.5 205.7V242.5M584.5 192.8V245.7M585.5 203.2V244.6M586.5 204.2V245.8M587.5 196.8V228.3M588.5 206.1V233.2M589.5 210.4V238.4M590.5 208.6V231.0M591.5 215.6V235.2M592.5 208.6V231.0M593.5 216.1V244.4M594.5 210.6V235.3M595.5 209.5V230.7M596.5 218.4V254.8M597.5 204.7V242.4M598.5 207.5V251.2M599.5 185.4V239.4M600.5 199.1V266.1M601.5 177.7V268.2M602.5 161.1V250.6M603.5 197.1V271.5M604.5 158.9V261.8M605.5 176.5V259.2M606.5 176.3V275.3M607.5 153.2V267.6M608.5 192.3V274.2M609.5 150.6V252.0M610.5 149.8V273.4M611.5 184.1V279.3M612.5 142.6V242.0M613.5 180.2V273.4M614.5 145.0V248.3M615.5 154.4V283.7M616.5 172.5V273.9M617.5 151.8V259.1M618.5 183.4V248.1M619.5 180.7V261.3M620.5 158.5V251.4M621.5 190.7V284.3M622.5 171.5V256.4M623.5 166.9V255.6M624.5 197.6V280.4M625.5 174.4V279.7M626.5 187.0V255.1M627.5 204.5V278.8M628.5 181.2V254.2M629.5 179.0V275.0M630.5 193.0V277.5M631.5 172.0V262.0M632.5 204.8V276.6M633.5 186.0V241.4M634.5 175.1V253.0M635.5 190.7V273.4M636.5 196.6V272.4M637.5 178.9V267.2M638.5 200.9V262.8M639.5 185.2V245.7M640.5 209.6V243.6M641.5 200.8V241.0M642.5 197.2V235.7M643.5 213.6V241.7M644.5 206.6V227.8M645.5 208.3V233.6M646.5 217.9V242.1M647.5 213.2V234.6M648.5 210.8V243.5M649.5 214.3V236.5M650.5 206.9V233.6M651.5 211.1V254.5M652.5 199.1V258.8M653.5 207.1V250.3M654.5 198.6V249.7M655.5 186.0V236.7M656.5 198.3V274.7M657.5 165.8V246.9M658.5 174.9V293.4M659.5 177.3V268.7M660.5 180.7V290.2M661.5 192.8V290.6M662.5 187.1V278.9M663.5 175.1V259.4M664.5 206.5V282.5M665.5 186.5V279.7M666.5 198.9V266.6M667.5 195.4V251.6M668.5 176.4V261.0M669.5 187.9V255.4M670.5 189.0V278.3M671.5 179.9V275.0M672.5 211.4V280.2M673.5 177.5V257.1M674.5 190.4V258.5M675.5 197.7V264.7M676.5 179.9V241.9M677.5 195.6V277.6M678.5 209.1V276.2M679.5 182.2V239.3M680.5 204.7V266.2M681.5 183.7V245.4M682.5 186.2V256.9M683.5 212.4V258.6M684.5 188.6V268.9M685.5 185.8V257.5M686.5 206.3V270.8M687.5 187.7V264.0M688.5 213.4V269.7M689.5 198.0V253.6M690.5 191.9V247.0M691.5 206.8V267.9M692.5 200.6V248.4M693.5 196.6V263.6M694.5 198.8V243.4M695.5 196.9V239.3M696.5 208.7V263.7M697.5 198.7V240.0M698.5 215.3V261.8M699.5 205.2V237.7M700.5 204.0V244.2M701.5 207.8V247.7M702.5 203.6V241.9M703.5 212.8V252.4M704.5 203.9V244.8M705.5 196.3V234.9M706.5 214.1V251.9M707.5 187.9V244.1M708.5 187.3V253.7M709.5 195.4V259.0M710.5 187.0V235.4M711.5 206.2V243.8M712.5 201.5V246.4M713.5 190.3V254.1M714.5 209.1V253.1M715.5 190.7V232.7M716.5 200.1V247.9M717.5 191.3V254.4M718.5 197.9V249.5M719.5 198.8V246.7M720.5 193.5V253.2M721.5 210.2V260.1M722.5 191.4V235.9M723.5 211.6V266.7M724.5 178.7V238.9M725.5 169.7V266.1M726.5 189.2V271.3M727.5 151.0V254.6M728.5 173.0V246.5M729.5 190.9V274.9M730.5 144.3V240.5M731.5 160.9V264.9M732.5 155.6V281.3M733.5 162.7V264.6M734.5 185.1V282.9M735.5 132.2V240.2M736.5 142.6V284.4M737.5 156.8V266.2M738.5 129.3V242.2M739.5 168.1V286.6M740.5 140.6V251.3M741.5 164.6V254.4M742.5 179.9V284.4M743.5 145.3V259.9M744.5 171.3V282.9M745.5 178.4V282.4M746.5 153.3V236.4M747.5 169.4V257.4M748.5 173.0V280.8M749.5 161.3V245.4M750.5 187.0V279.7M751.5 194.6V275.4M752.5 164.9V257.7M753.5 188.1V276.6M754.5 166.9V249.3M755.5 167.9V266.3M756.5 194.9V273.4M757.5 169.5V252.5M758.5 203.8V272.5M759.5 177.1V245.4M760.5 179.4V266.3M761.5 188.5V266.5M762.5 172.0V257.9M763.5 205.0V259.2M764.5 174.6V247.1M765.5 192.3V266.8M766.5 192.8V265.0M767.5 181.0V235.9M768.5 212.5V255.2M769.5 189.5V243.8M770.5 201.8V253.1M771.5 204.9V256.6M772.5 193.4V232.0M773.5 206.9V253.5M774.5 198.9V245.6M775.5 210.7V245.9M776.5 203.2V232.7M777.5 208.5V248.1M778.5 217.6V246.8M779.5 206.5V234.4M780.5 214.7V242.3M781.5 198.5V236.9M782.5 187.5V260.2M783.5 200.6V258.5M784.5 167.8V247.2M785.5 201.8V276.0M786.5 172.8V273.1M787.5 173.7V258.6M788.5 198.9V261.9M789.5 192.4V288.2M790.5 177.9V262.1M791.5 196.5V284.8M792.5 204.3V282.8M793.5 181.1V261.0M794.5 191.2V257.9M795.5 196.1V255.9M796.5 191.6V272.9M797.5 202.0V275.9M798.5 191.9V247.9M799.5 189.2V252.2M800.5 192.3V241.0M801.5 192.1V257.8M802.5 196.1V246.6M803.5 186.5V244.9M804.5 208.5V261.4M805.5 195.5V246.9M806.5 194.6V262.6M807.5 205.6V270.3M808.5 190.4V250.3M809.5 204.3V269.1M810.5 190.8V248.9M811.5 192.7V242.8M812.5 209.4V267.3M813.5 191.4V250.9M814.5 209.8V263.9M815.5 196.6V249.4M816.5 199.0V263.2M817.5 214.2V255.6M818.5 194.4V235.7M819.5 209.7V258.3M820.5 205.1V259.3M821.5 196.3V239.4M822.5 211.3V258.4M823.5 199.2V234.7M824.5 208.0V239.0M825.5 208.7V246.6M826.5 199.6V243.2M827.5 209.0V251.4M828.5 206.9V254.5M829.5 205.1V250.8M830.5 215.3V252.4M831.5 206.4V232.2M832.5 214.9V245.9M833.5 209.8V237.9M834.5 210.4V229.3" stroke="#ffbf00" stroke-width="1" fill="none"/>
 <path d="M43.5 416.1V439.0M44.5 404.0V430.5M45.5 411.9V446.9M46.5 404.9V447.6M47.5 408.8V443.4M48.5 412.9V447.2M49.5 402.4V433.6M50.5 405.3V428.8M51.5 410.6V438.0M52.5 402.0V445.7M53.5 413.3V451.8M54.5 402.0V436.8M55.5 412.2V452.1M56.5 404.4V438.2M57.5 408.5V452.5M58.5 407.2V442.1M59.5 402.0V432.0M60.5 404.7V453.0M61.5 402.3V437.0M62.5 412.2V452.6M63.5 402.8V452.5M64.5 409.1V438.0M65.5 407.8V452.1M66.5 403.6V431.0M67.5 411.5V451.8M68.5 414.2V451.6M69.5 406.9V436.0M70.5 404.7V429.0M71.5 413.6V449.8M72.5 406.3V438.8M73.5 414.0V450.3M74.5 411.9V449.9M75.5 406.2V442.0M76.5 413.7V447.8M77.5 408.1V439.8M78.5 407.5V430.6M79.5 411.9V448.3M80.5 408.3V427.6M81.5 406.2V433.7M82.5 406.7V448.9M83.5 394.6V439.2M84.5 395.1V452.7M85.5 405.7V447.6M86.5 383.9V435.8M87.5 398.9V435.6M88.5 402.7V453.6M89.5 388.6V440.4M90.5 401.7V446.5M91.5 403.8V443.6M92.5 391.3V441.3M93.5 400.8V452.5M94.5 395.5V432.9M95.5 406.1V452.1M96.5 404.6V451.3M97.5 388.9V442.8M98.5 395.9V448.8M99.5 403.6V451.5M100.5 395.0V451.3M101.5 393.9V449.8M102.5 397.9V441.8M103.5 388.9V430.9M104.5 400.9V453.9M105.5 389.3V431.8M106.5 401.3V446.5M107.5 389.7V434.9M108.5 394.7V455.2M109.5 402.1V455.4M110.5 393.2V449.9M111.5 398.8V457.2M112.5 400.8V457.2M113.5 386.3V438.9M114.5 395.8V451.2M115.5 383.7V430.7M116.5 386.7V439.8M117.5 404.3V455.6M118.5 379.8V437.9M119.5 399.0V455.0M120.5 377.4V436.9M121.5 383.2V454.6M122.5 399.2V454.7M123.5 380.5V441.4M124.5 394.4V454.6M125.5 390.8V438.8M126.5 383.0V444.2M127.5 402.1V454.6M128.5 387.3V448.4M129.5 379.9V441.8M130.5 403.9V454.6M131.5 381.9V439.8M132.5 384.3V444.7M133.5 400.6V450.6M134.5 383.7V432.1M135.5 410.6V447.8M136.5 384.3V431.4M137.5 401.2V445.1M138.5 391.7V436.2M139.5 387.4V433.3M140.5 399.6V439.9M141.5 389.5V430.9M142.5 410.5V439.7M143.5 395.9V436.9M144.5 398.6V434.4M145.5 411.9V434.0M146.5 402.2V435.0M147.5 404.8V432.5M148.5 415.5V436.6M149.5 405.5V430.1M150.5 411.5V436.9M151.5 410.2V431.2M152.5 406.6V435.6M153.5 412.9V436.3M154.5 407.4V426.7M155.5 408.8V428.4M156.5 411.8V439.8M157.5 393.7V442.8M158.5 401.7V455.2M159.5 379.6V453.6M160.5 378.5V447.2M161.5 399.7V471.7M162.5 371.3V442.1M163.5 382.3V452.8M164.5 402.6V466.2M165.5 369.3V442.7M166.5 403.1V489.7M167.5 374.5V453.0M168.5 393.5V486.4M169.5 392.7V483.0M170.5 389.5V481.2M171.5 405.6V482.4M172.5 378.4V456.7M173.5 376.4V437.1M174.5 405.2V473.9M175.5 372.6V475.8M176.5 376.6V469.1M177.5 401.4V470.9M178.5 376.4V444.3M179.5 393.5V477.3M180.5 408.6V472.9M181.5 387.0V473.7M182.5 389.4V474.1M183.5 393.1V472.8M184.5 389.2V440.2M185.5 405.2V470.1M186.5 384.6V437.8M187.5 409.2V465.4M188.5 388.5V439.8M189.5 393.6V445.3M190.5 399.1V451.9M191.5 388.7V443.0M192.5 405.1V437.5M193.5 399.3V456.5M194.5 398.9V460.8M195.5 404.2V451.3M196.5 390.2V438.1M197.5 406.1V458.5M198.5 390.8V435.5M199.5 402.5V455.1M200.5 391.4V455.5M201.5 400.8V446.3M202.5 407.5V454.8M203.5 393.5V432.4M204.5 396.3V444.6M205.5 401.9V448.5M206.5 395.5V433.8M207.5 403.4V449.1M208.5 407.9V449.0M209.5 397.5V428.4M210.5 410.3V438.7M211.5 405.8V446.7M212.5 399.8V437.1M213.5 407.6V445.8M214.5 405.2V438.5M215.5 404.1V431.6M216.5 414.2V444.6M217.5 404.6V438.6M218.5 406.1V428.6M219.5 413.0V452.6M220.5 383.3V447.1M221.5 393.6V452.7M222.5 362.5V453.3M223.5 351.7V436.5M224.5 381.7V474.6M225.5 348.4V444.5M226.5 330.9V446.9M227.5 381.1V480.7M228.5 333.6V476.7M229.5 330.9V467.3M230.5 370.0V486.7M231.5 330.9V473.6M232.5 331.1V485.8M233.5 356.6V490.1M234.5 330.9V441.9M235.5 353.2V492.4M236.5 334.0V474.2M237.5 335.6V465.2M238.5 380.6V487.5M239.5 354.6V469.0M240.5 366.8V453.5M241.5 381.9V489.4M242.5 353.3V448.3M243.5 392.4V488.0M244.5 356.5V451.3M245.5 364.4V454.7M246.5 377.6V484.2M247.5 372.3V477.0M248.5 367.2V450.4M249.5 385.6V450.4M250.5 363.8V448.3M251.5 397.2V473.0M252.5 381.5V450.0M253.5 366.6V454.9M254.5 395.6V467.3M255.5 368.4V435.7M256.5 399.3V463.6M257.5 372.0V442.7M258.5 394.2V458.0M259.5 389.8V447.3M260.5 380.0V449.4M261.5 404.1V455.3M262.5 385.3V444.8M263.5 404.6V438.5M264.5 387.0V439.5M265.5 394.3V444.8M266.5 399.1V449.3M267.5 393.0V444.8M268.5 404.5V435.3M269.5 392.5V432.0M270.5 399.1V429.9M271.5 409.2V442.1M272.5 399.2V432.5M273.5 402.7V439.2M274.5 408.0V439.5M275.5 392.4V435.6M276.5 404.0V442.9M277.5 399.2V456.0M278.5 383.4V459.9M279.5 399.7V456.1M280.5 390.8V438.3M281.5 382.4V463.1M282.5 401.3V469.6M283.5 376.5V457.0M284.5 401.4V470.6M285.5 386.8V470.8M286.5 389.2V451.3M287.5 408.8V471.2M288.5 387.4V458.3M289.5 400.2V454.5M290.5 389.3V453.9M291.5 383.7V447.1M292.5 394.9V471.9M293.5 382.5V438.5M294.5 401.7V471.9M295.5 400.0V471.9M296.5 382.1V455.9M297.5 401.4V465.4M298.5 381.1V436.8M299.5 399.5V469.1M300.5 400.3V467.7M301.5 383.6V447.1M302.5 407.4V459.1M303.5 392.6V456.2M304.5 389.2V448.8M305.5 399.4V460.3M306.5 390.7V436.4M307.5 403.0V444.6M308.5 390.7V455.3M309.5 391.7V442.3M310.5 409.0V452.3M311.5 398.2V435.7M312.5 399.2V440.5M313.5 412.3V449.3M314.5 399.8V434.9M315.5 402.8V429.5M316.5 412.7V442.6M317.5 402.8V438.5M318.5 409.6V434.7M319.5 412.7V443.3M320.5 401.4V429.0M321.5 408.6V437.7M322.5 401.4V428.9M323.5 415.0V436.7M324.5 402.5V426.5M325.5 412.7V438.6M326.5 406.7V438.0M327.5 404.8V434.4M328.5 413.9V429.1M329.5 403.3V428.5M330.5 410.6V435.6M331.5 400.6V426.8M332.5 409.2V436.8M333.5 397.9V426.9M334.5 406.1V428.3M335.5 401.9V432.2M336.5 402.4V425.1M337.5 408.3V428.6M338.5 403.1V425.5M339.5 414.7V430.5M340.5 400.4V438.2M341.5 380.0V433.9M342.5 388.5V453.6M343.5 378.7V436.7M344.5 384.9V455.2M345.5 364.7V436.1M346.5 369.2V439.0M347.5 383.1V444.6M348.5 371.1V449.0M349.5 397.9V459.1M350.5 367.7V437.0M351.5 375.8V461.3M352.5 399.2V462.7M353.5 357.8V434.6M354.5 375.5V447.5M355.5 361.8V466.8M356.5 358.0V436.4M357.5 393.8V462.4M358.5 377.1V468.5M359.5 362.8V448.5M360.5 394.2V468.0M361.5 365.9V440.0M362.5 388.6V469.5M363.5 368.6V455.2M364.5 389.7V463.2M365.5 396.1V459.4M366.5 372.6V436.7M367.5 401.5V460.7M368.5 394.0V464.5M369.5 375.7V449.3M370.5 406.8V462.2M371.5 392.7V461.1M372.5 378.9V451.6M373.5 393.5V459.4M374.5 381.0V437.4M375.5 400.7V458.3M376.5 383.2V433.6M377.5 409.0V439.9M378.5 388.1V437.1M379.5 386.6V455.9M380.5 400.2V454.2M381.5 386.6V436.9M382.5 399.6V453.1M383.5 393.5V442.7M384.5 387.9V432.2M385.5 409.1V450.4M386.5 389.5V438.7M387.5 398.5V449.3M388.5 403.1V435.8M389.5 396.4V431.3M390.5 403.2V444.0M391.5 396.1V440.7M392.5 411.1V446.5M393.5 397.2V434.0M394.5 404.7V437.8M395.5 408.7V436.1M396.5 400.4V426.4M397.5 407.2V440.6M398.5 409.5V444.9M399.5 398.9V443.9M400.5 404.5V447.1M401.5 397.2V442.1M402.5 400.0V444.2M403.5 408.1V447.1M404.5 395.3V428.3M405.5 401.6V447.1M406.5 399.3V446.8M407.5 397.3V432.4M408.5 410.8V445.5M409.5 396.3V426.9M410.5 408.1V447.1M411.5 399.9V439.1M412.5 396.5V429.8M413.5 409.7V447.1M414.5 396.5V445.4M415.5 408.4V447.1M416.5 402.0V434.5M417.5 408.6V434.6M418.5 399.5V444.3M419.5 397.0V434.3M420.5 412.2V446.9M421.5 397.2V434.2M422.5 409.6V445.8M423.5 398.9V432.8M424.5 400.5V444.0M425.5 409.3V441.0M426.5 398.7V430.4M427.5 414.0V445.6M428.5 399.3V430.8M429.5 403.7V429.7M430.5 408.2V444.8M431.5 400.3V431.7M432.5 412.9V443.1M433.5 406.8V426.2M434.5 401.3V437.7M435.5 411.8V437.1M436.5 406.6V435.2M437.5 402.3V441.8M438.5 415.5V442.1M439.5 404.3V434.3M440.5 403.0V438.9M441.5 412.9V437.5M442.5 402.5V428.9M443.5 408.5V430.2M444.5 407.9V429.2M445.5 401.7V438.4M446.5 407.5V432.9M447.5 406.0V437.1M448.5 406.3V431.7M449.5 407.7V439.5M450.5 403.0V431.1M451.5 408.4V443.9M452.5 399.6V432.4M453.5 406.2V443.1M454.5 399.1V432.6M455.5 405.1V444.7M456.5 405.1V437.9M457.5 399.1V431.3M458.5 403.3V443.7M459.5 410.9V431.6M460.5 400.2V430.4M461.5 413.3V442.6M462.5 401.3V428.8M463.5 409.5V432.1M464.5 408.9V434.3M465.5 403.0V431.4M466.5 412.7V435.5M467.5 403.7V425.6M468.5 404.3V430.4M469.5 413.8V435.0M470.5 409.2V428.6M471.5 400.5V427.1M472.5 411.0V445.9M473.5 386.7V441.2M474.5 381.0V454.6M475.5 403.4V440.3M476.5 362.9V430.0M477.5 390.6V457.3M478.5 370.8V457.8M479.5 370.3V458.3M480.5 389.4V450.5M481.5 365.4V440.5M482.5 393.1V459.9M483.5 364.0V446.5M484.5 370.5V435.6M485.5 386.5V462.1M486.5 360.7V445.4M487.5 379.9V436.7M488.5 390.9V464.2M489.5 361.6V439.4M490.5 376.8V437.5M491.5 392.0V446.8M492.5 369.3V443.9M493.5 392.4V452.0M494.5 376.9V458.5M495.5 371.3V439.1M496.5 386.6V468.0M497.5 382.6V468.3M498.5 373.3V438.0M499.5 394.2V467.8M500.5 384.2V467.6M501.5 388.5V445.1M502.5 404.4V466.4M503.5 383.9V438.1M504.5 378.8V447.2M505.5 402.0V462.8M506.5 406.7V460.8M507.5 383.7V442.5M508.5 402.3V456.8M509.5 386.5V443.8M510.5 392.1V453.6M511.5 407.0V449.1M512.5 390.2V435.6M513.5 400.8V435.0M514.5 405.6V447.6M515.5 396.7V430.5M516.5 409.0V444.8M517.5 400.6V433.4M518.5 411.5V437.5M519.5 408.9V428.4M520.5 400.8V439.7M521.5 406.7V442.8M522.5 391.3V431.5M523.5 409.0V448.5M524.5 382.3V438.8M525.5 390.6V448.6M526.5 393.5V446.7M527.5 388.1V447.2M528.5 410.9V446.8M529.5 390.4V437.6M530.5 393.9V436.6M531.5 402.6V447.0M532.5 392.4V439.1M533.5 402.2V447.1M534.5 390.2V435.4M535.5 393.5V447.9M536.5 406.3V449.9M537.5 387.0V443.6M538.5 396.5V440.9M539.5 403.0V443.4M540.5 388.9V433.5M541.5 406.5V448.1M542.5 387.0V437.8M543.5 387.0V431.7M544.5 395.6V444.3M545.5 387.2V438.7M546.5 405.9V445.7M547.5 387.7V431.0M548.5 412.3V447.1M549.5 388.1V431.9M550.5 401.5V447.1M551.5 388.7V442.8M552.5 395.9V442.0M553.5 398.1V433.4M554.5 392.2V431.6M555.5 412.3V443.4M556.5 390.2V435.3M557.5 403.4V443.5M558.5 401.0V436.8M559.5 392.3V432.4M560.5 405.5V442.1M561.5 395.3V428.7M562.5 394.8V428.8M563.5 411.2V442.1M564.5 395.5V430.8M565.5 405.5V441.5M566.5 400.8V428.7M567.5 402.1V441.0M568.5 411.7V440.7M569.5 401.2V427.5M570.5 401.9V435.4M571.5 413.1V440.5M572.5 399.8V431.4M573.5 407.1V440.5M574.5 410.9V434.4M575.5 401.4V436.0M576.5 413.2V441.4M577.5 396.8V437.6M578.5 411.8V443.3M579.5 392.2V426.3M580.5 400.8V443.5M581.5 388.7V433.8M582.5 395.5V441.7M583.5 406.5V446.0M584.5 389.6V436.8M585.5 401.5V432.4M586.5 405.5V442.7M587.5 396.0V439.7M588.5 400.8V431.1M589.5 412.6V438.2M590.5 407.3V428.1M591.5 409.4V429.5M592.5 416.0V437.0M593.5 409.4V437.8M594.5 410.5V436.6M595.5 412.9V437.7M596.5 410.8V443.4M597.5 411.3V441.8M598.5 412.6V453.4M599.5 389.6V434.6M600.5 395.4V441.5M601.5 402.1V456.2M602.5 359.8V452.3M603.5 393.4V461.3M604.5 361.0V444.3M605.5 372.2V453.5M606.5 390.5V465.4M607.5 362.9V461.4M608.5 362.1V468.2M609.5 391.3V469.5M610.5 363.0V470.9M611.5 361.0V466.3M612.5 387.8V469.5M613.5 351.2V467.3M614.5 392.5V468.1M615.5 356.7V446.6M616.5 383.5V477.2M617.5 366.3V445.0M618.5 356.9V462.8M619.5 391.9V476.1M620.5 359.4V460.9M621.5 393.7V478.8M622.5 362.0V463.8M623.5 372.3V464.3M624.5 401.8V466.7M625.5 369.2V448.9M626.5 377.2V475.8M627.5 389.2V474.4M628.5 369.4V446.8M629.5 405.2V473.0M630.5 382.3V447.0M631.5 375.5V446.7M632.5 387.7V470.2M633.5 375.5V449.1M634.5 379.6V466.8M635.5 392.9V449.7M636.5 379.5V463.3M637.5 401.3V461.6M638.5 382.3V436.1M639.5 410.3V450.2M640.5 389.6V439.1M641.5 394.9V425.0M642.5 405.0V436.5M643.5 398.2V433.6M644.5 408.8V431.1M645.5 404.7V424.8M646.5 413.0V432.4M647.5 407.8V431.1M648.5 414.1V438.0M649.5 411.2V432.4M650.5 409.2V439.3M651.5 410.2V434.5M652.5 400.6V433.8M653.5 409.7V446.4M654.5 391.7V448.1M655.5 390.8V444.2M656.5 381.4V445.5M657.5 359.8V446.9M658.5 397.3V485.5M659.5 366.1V469.3M660.5 392.0V468.7M661.5 404.2V469.7M662.5 375.9V438.9M663.5 395.9V465.9M664.5 387.8V448.5M665.5 397.7V454.6M666.5 388.6V458.9M667.5 382.9V473.9M668.5 404.7V475.4M669.5 380.6V458.3M670.5 397.0V457.4M671.5 397.6V456.1M672.5 381.6V434.8M673.5 405.6V474.8M674.5 389.4V452.5M675.5 387.5V442.2M676.5 409.8V468.3M677.5 386.6V455.0M678.5 385.4V435.0M679.5 399.8V469.1M680.5 387.5V445.7M681.5 407.2V466.8M682.5 403.7V466.0M683.5 388.0V437.7M684.5 398.0V458.9M685.5 392.9V463.6M686.5 398.5V449.6M687.5 413.0V462.0M688.5 391.0V439.8M689.5 399.9V461.3M690.5 392.6V457.3M691.5 393.4V442.5M692.5 400.7V453.9M693.5 405.9V442.0M694.5 395.9V436.8M695.5 404.1V453.3M696.5 400.9V454.8M697.5 398.7V433.2M698.5 410.7V449.7M699.5 408.4V445.9M700.5 401.4V437.8M701.5 410.2V448.8M702.5 406.5V441.8M703.5 401.4V435.6M704.5 409.6V447.8M705.5 408.7V443.7M706.5 398.0V438.9M707.5 406.7V442.7M708.5 383.8V436.0M709.5 409.0V446.5M710.5 384.6V436.7M711.5 386.5V437.3M712.5 403.9V434.8M713.5 386.2V442.9M714.5 396.1V449.7M715.5 404.3V447.7M716.5 389.0V434.7M717.5 393.7V434.1M718.5 408.1V447.1M719.5 391.7V438.9M720.5 399.9V453.7M721.5 393.0V429.8M722.5 395.2V447.6M723.5 402.5V456.9M724.5 378.4V441.8M725.5 387.7V472.3M726.5 359.8V459.6M727.5 378.3V475.9M728.5 392.3V463.7M729.5 355.0V452.7M730.5 359.2V452.5M731.5 379.5V472.6M732.5 350.1V450.4M733.5 364.1V468.8M734.5 371.7V470.2M735.5 344.2V448.5M736.5 365.9V448.2M737.5 396.8V476.7M738.5 340.4V455.9M739.5 387.3V475.8M740.5 343.6V441.9M741.5 366.3V474.9M742.5 381.1V463.8M743.5 348.4V448.0M744.5 373.9V455.0M745.5 369.7V454.7M746.5 358.4V440.6M747.5 386.7V470.2M748.5 368.2V447.6M749.5 359.7V437.6M750.5 398.4V466.8M751.5 366.2V444.3M752.5 385.8V463.5M753.5 381.0V466.8M754.5 366.7V439.6M755.5 384.1V443.8M756.5 377.6V453.4M757.5 369.8V450.2M758.5 396.9V464.9M759.5 371.8V443.8M760.5 371.2V442.4M761.5 400.7V461.9M762.5 372.1V440.5M763.5 405.6V459.9M764.5 378.8V448.9M765.5 380.4V446.9M766.5 407.1V456.8M767.5 384.7V440.0M768.5 396.9V442.5M769.5 393.2V453.6M770.5 385.5V427.9M771.5 405.5V448.8M772.5 404.1V431.0M773.5 395.0V437.8M774.5 411.4V448.2M775.5 401.4V438.4M776.5 406.5V446.3M777.5 407.8V445.7M778.5 404.3V429.2M779.5 410.4V444.4M780.5 406.2V431.6M781.5 396.3V449.1M782.5 403.6V454.2M783.5 362.9V437.7M784.5 365.5V447.4M785.5 397.4V453.7M786.5 373.5V446.1M787.5 390.0V468.5M788.5 393.7V460.4M789.5 377.1V456.4M790.5 398.2V471.3M791.5 384.6V456.1M792.5 391.2V457.5M793.5 391.6V453.4M794.5 383.8V442.8M795.5 404.2V458.2M796.5 387.5V448.3M797.5 394.2V436.6M798.5 407.1V463.2M799.5 385.1V437.8M800.5 400.6V463.6M801.5 399.8V455.6M802.5 388.6V450.3M803.5 405.8V458.6M804.5 388.4V451.3M805.5 406.0V456.9M806.5 398.9V452.0M807.5 390.2V439.4M808.5 411.7V459.7M809.5 391.3V435.6M810.5 395.2V445.1M811.5 407.0V459.1M812.5 392.9V441.4M813.5 393.5V438.6M814.5 409.8V456.4M815.5 394.0V455.5M816.5 407.6V457.7M817.5 395.1V430.7M818.5 394.8V435.7M819.5 404.8V456.8M820.5 395.7V437.1M821.5 396.6V439.1M822.5 409.6V455.4M823.5 398.6V442.6M824.5 408.2V441.2M825.5 405.9V442.8M826.5 399.6V436.9M827.5 403.8V453.1M828.5 410.0V452.6M829.5 402.3V441.5M830.5 412.5V450.7M831.5 403.8V434.9M832.5 415.2V449.2M833.5 405.9V434.8M834.5 406.1V437.4" stroke="#ffbf00" stroke-width="1" fill="none"/>
 <path d="M42.5 124V519" stroke="#e01818" stroke-width="1"/>
 <path d="M591.5 124V519" stroke="#72a9dd" stroke-opacity="0.5" stroke-width="1"/>
 <path d="M834.5 124V519" stroke="#18d018" stroke-width="1"/>
</svg>
<div id="scr" class="a"></div>
<div id="scri" class="a"></div>

<div class="a lbl" style="left:30px;color:#8c0c1c">Start Point</div>
<div class="a lbl" style="left:119px;color:#47628e">Loop Point</div>
<div class="a lbl" style="left:208px;color:#0e840e">End Point</div>
<div class="a box" style="left:30px;border-color:#b8f020"></div>
<div class="a box" style="left:119px"></div>
<div class="a box" style="left:208px"></div>
<div class="a val" style="left:34px">0</div>
<div class="a val" style="left:123px">35441</div>
<div class="a val" style="left:212px">51120</div>
<div class="a prog" style="left:33px;width:74px"></div>
<div class="a prog" style="left:33px;width:1px;background:#f0a000"></div>
<div class="a prog" style="left:122px;width:74px"></div>
<div class="a prog" style="left:122px;width:52px;background:linear-gradient(90deg,#f0a800,#ffe000)"></div>
<div class="a prog" style="left:211px;width:74px;background:linear-gradient(90deg,#f0a800,#ffe800)"></div>

<div class="a btn" style="left:676px">OK</div>
<div class="a btn" style="left:766px">Cancel</div>
</body></html>
